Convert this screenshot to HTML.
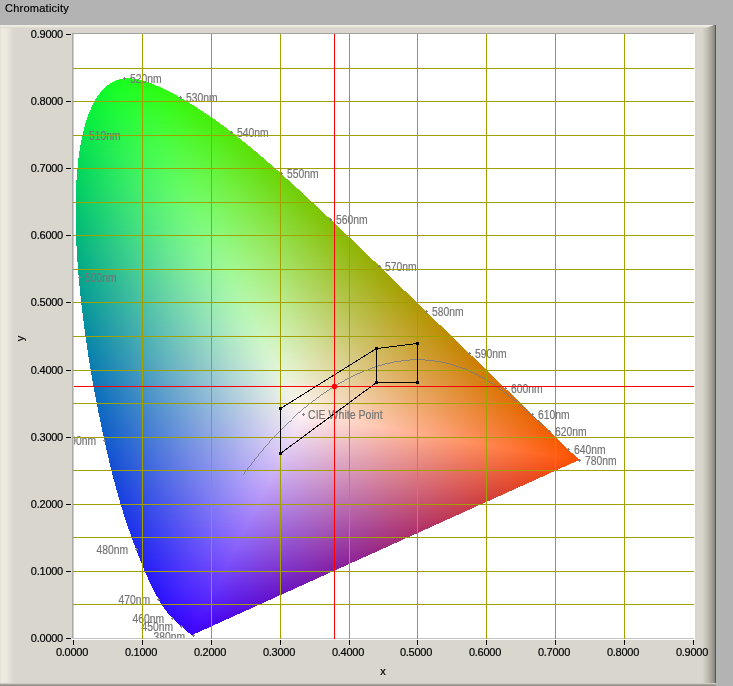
<!DOCTYPE html>
<html><head><meta charset="utf-8"><title>Chromaticity</title>
<style>
html,body{margin:0;padding:0}
body{width:733px;height:686px;background:#b3b3b3;position:relative;overflow:hidden;font-family:"Liberation Sans",sans-serif;font-size:11px;color:#000}
#title,.yl,.xl,#yy{will-change:transform}
#title,.yl,.xl,#yy{-webkit-text-stroke:.2px #000}
.lb{-webkit-text-stroke:.2px #757575}
#title{position:absolute;left:5.4px;top:2px;line-height:13px;letter-spacing:.25px;white-space:nowrap}
#panel{position:absolute;left:0;top:25px;width:716px;height:661px;background:#d9d6ce;overflow:hidden}
#pl{position:absolute;left:0;top:0;width:14px;height:661px;background:linear-gradient(90deg,#e2dfd5 0,#eeebe1 2px,#ece9df 6px,#d9d6ce 14px)}
#pt{position:absolute;left:0;top:0;width:714px;height:3px;clip-path:polygon(0 0,714px 0,706px 3px,0 3px);background:linear-gradient(180deg,#f1eee3 0,#ebe8dd 1.5px,#d9d6ce 3px)}
#pr{position:absolute;left:702px;top:0;width:14px;height:661px;background:linear-gradient(90deg,#d9d6ce 0,#c2bfb6 5px,#a29f97 10px,#8a877f 12.5px,#5e5c55 13px,#55534d 14px)}
#pb{position:absolute;left:0;top:658px;width:716px;height:3px;background:linear-gradient(180deg,#d2cfc7 0,#cbc8c0 1px,#a7a49c 1.5px,#8b8880 3px)}
#plot{position:absolute;left:72px;top:33px;width:623px;height:607px;background:#fff;overflow:hidden}
#bw{position:absolute;left:0;top:606px;width:623px;height:1px;background:#fff}
#bl{position:absolute;left:0;top:0;width:2px;height:606px;background:linear-gradient(90deg,#a9a9a9 1px,#cdcdcd 1px)}
#bt{position:absolute;left:0;top:0;width:622px;height:1px;background:#a2a2a2}
#bb{position:absolute;left:0;top:605px;width:622px;height:1px;background:#c2c2c6}
#fill{position:absolute;left:-72px;top:-33px;will-change:transform}
#fill i{position:absolute;height:1px;display:block}
.lb{position:absolute;color:#757575;font-size:12.5px;line-height:13px;white-space:nowrap;transform:scaleX(.827);transform-origin:0 0}
.lr{transform-origin:100% 0}
.mk{position:absolute;width:3px;height:3px}
.mk:before{content:"";position:absolute;left:1px;top:0;width:1px;height:3px;background:#808080}
.mk:after{content:"";position:absolute;left:0;top:1px;width:3px;height:1px;background:#808080}
.gv{position:absolute;top:1px;width:1px;height:605px;background:#a0a000}
.gh{position:absolute;left:1px;height:1px;width:621px;background:#a0a000}
.tk{position:absolute;background:#000}
.yl{position:absolute;width:60px;text-align:right;line-height:13px;letter-spacing:-.25px;white-space:nowrap}
.xl{position:absolute;width:60px;text-align:center;line-height:13px;letter-spacing:-.25px;white-space:nowrap}
.ov{position:absolute;left:0;top:0}
</style></head>
<body>
<div id="title">Chromaticity</div>
<div id="panel"><div id="pl"></div><div id="pr"></div><div id="pt"></div><div id="pb"></div></div>
<div id="plot">
<div id="fill"><i style="top:78px;left:124px;width:8px;background:linear-gradient(90deg,#1aff1c 0.5px,#1eff19 7.5px)"></i>
<i style="top:79px;left:119px;width:20px;background:linear-gradient(90deg,#17ff1f 0.5px,#21ff16 19.5px)"></i>
<i style="top:80px;left:116px;width:27px;background:linear-gradient(90deg,#16fe21 0.5px,#23fe15 26.5px)"></i>
<i style="top:81px;left:114px;width:32px;background:linear-gradient(90deg,#15fe22 0.5px,#1dff1e 13.5px,#25fe14 31.5px)"></i>
<i style="top:82px;left:112px;width:37px;background:linear-gradient(90deg,#14fd24 0.5px,#1eff1e 17.5px,#26fd13 36.5px)"></i>
<i style="top:83px;left:110px;width:42px;background:linear-gradient(90deg,#13fd25 0.5px,#20ff1e 21.5px,#28fd12 41.5px)"></i>
<i style="top:84px;left:109px;width:45px;background:linear-gradient(90deg,#13fc26 0.5px,#1eff20 18.5px,#29fc12 44.5px)"></i>
<i style="top:85px;left:107px;width:49px;background:linear-gradient(90deg,#11fc27 0.5px,#1fff21 21.5px,#2afc12 48.5px)"></i>
<i style="top:86px;left:106px;width:53px;background:linear-gradient(90deg,#11fb28 0.5px,#1fff22 21.5px,#28fe18 41.5px,#2bfb11 52.5px)"></i>
<i style="top:87px;left:105px;width:56px;background:linear-gradient(90deg,#11fb29 0.5px,#21ff22 25.5px,#2cfb10 55.5px)"></i>
<i style="top:88px;left:104px;width:59px;background:linear-gradient(90deg,#10fb2a 0.5px,#2f2 28.5px,#28fe1c 40.5px,#2dfb10 58.5px)"></i>
<i style="top:89px;left:103px;width:62px;background:linear-gradient(90deg,#10fa2b 0.5px,#21ff24 26.5px,#29fe1c 42.5px,#2efa10 61.5px)"></i>
<i style="top:90px;left:102px;width:65px;background:linear-gradient(90deg,#0ffa2c 0.5px,#23ff24 29.5px,#2bfd19 50.5px,#2ffa0f 64.5px)"></i>
<i style="top:91px;left:101px;width:68px;background:linear-gradient(90deg,#0ef92d 0.5px,#18fc2a 12.5px,#26ff22 35.5px,#2afe1d 46.5px,#30f90f 67.5px)"></i>
<i style="top:92px;left:100px;width:71px;background:linear-gradient(90deg,#0ef92d 0.5px,#1efe29 22.5px,#24fe25 33.5px,#2afe1f 44.5px,#31f90e 70.5px)"></i>
<i style="top:93px;left:100px;width:73px;background:linear-gradient(90deg,#0ef82e 0.5px,#1bfd2b 17.5px,#26fe25 35.5px,#2cfe1d 49.5px,#32f80e 72.5px)"></i>
<i style="top:94px;left:99px;width:76px;background:linear-gradient(90deg,#0ef82f 0.5px,#1ffe2a 24.5px,#27fe25 38.5px,#2cfe1e 50.5px,#33f80d 75.5px)"></i>
<i style="top:95px;left:98px;width:79px;background:linear-gradient(90deg,#0df730 0.5px,#1cfd2c 20.5px,#27fe26 37.5px,#2ffd1c 57.5px,#34f70d 78.5px)"></i>
<i style="top:96px;left:97px;width:81px;background:linear-gradient(90deg,#0cf731 0.5px,#1dfd2d 22.5px,#27fe28 37.5px,#2dfe20 52.5px,#35f70d 80.5px)"></i>
<i style="top:97px;left:97px;width:83px;background:linear-gradient(90deg,#0df731 0.5px,#1afb2f 17.5px,#28fe28 39.5px,#30fd1d 59.5px,#36f70d 82.5px)"></i>
<i style="top:98px;left:96px;width:86px;background:linear-gradient(90deg,#0cf632 0.5px,#1dfc2f 21.5px,#29fe28 42.5px,#31fd1e 60.5px,#37f60c 85.5px)"></i>
<i style="top:99px;left:95px;width:89px;background:linear-gradient(90deg,#0bf533 0.5px,#1cfc30 21.5px,#27fe2b 37.5px,#31fd1f 61.5px,#38f50c 88.5px)"></i>
<i style="top:100px;left:95px;width:90px;background:linear-gradient(90deg,#0cf534 0.5px,#21fd2f 27.5px,#2efe26 50.5px,#35fb19 71.5px,#38f50c 89.5px)"></i>
<i style="top:101px;left:94px;width:93px;background:linear-gradient(90deg,#0bf534 0.5px,#20fc30 26.5px,#2afe2b 43.5px,#34fc1e 66.5px,#39f50b 92.5px)"></i>
<i style="top:102px;left:94px;width:95px;background:linear-gradient(90deg,#0bf435 0.5px,#1efc31 24.5px,#2bfe2c 43.5px,#33fd21 63.5px,#3af40b 94.5px)"></i>
<i style="top:103px;left:93px;width:97px;background:linear-gradient(90deg,#0af436 0.5px,#21fc32 28.5px,#2dfe2b 47.5px,#31fe26 58.5px,#37fb1b 74.5px,#3bf40b 96.5px)"></i>
<i style="top:104px;left:93px;width:99px;background:linear-gradient(90deg,#0bf336 0.5px,#20fc33 27.5px,#2dfe2c 48.5px,#36fc1f 70.5px,#3cf30a 98.5px)"></i>
<i style="top:105px;left:92px;width:102px;background:linear-gradient(90deg,#0af337 0.5px,#22fc33 29.5px,#2ffe2c 51.5px,#37fc20 71.5px,#3df30a 101.5px)"></i>
<i style="top:106px;left:92px;width:103px;background:linear-gradient(90deg,#0af238 0.5px,#1bf936 20.5px,#2afe30 41.5px,#35fd26 64.5px,#3bf817 85.5px,#3df20a 102.5px)"></i>
<i style="top:107px;left:91px;width:106px;background:linear-gradient(90deg,#09f238 0.5px,#1efa36 24.5px,#2efe2f 49.5px,#38fc22 72.5px,#3ef209 105.5px)"></i>
<i style="top:108px;left:91px;width:107px;background:linear-gradient(90deg,#0af239 0.5px,#1efa37 24.5px,#30fe2f 51.5px,#3bfa1d 81.5px,#3ff20a 106.5px)"></i>
<i style="top:109px;left:91px;width:109px;background:linear-gradient(90deg,#0af13a 0.5px,#24fc36 32.5px,#31fe2f 53.5px,#3afb20 78.5px,#40f109 108.5px)"></i>
<i style="top:110px;left:90px;width:111px;background:linear-gradient(90deg,#09f13a 0.5px,#27fc36 36.5px,#32fe2f 56.5px,#3bfb22 78.5px,#41f109 110.5px)"></i>
<i style="top:111px;left:90px;width:113px;background:linear-gradient(90deg,#09f03b 0.5px,#1ff939 26.5px,#2ffe33 48.5px,#3bfb24 76.5px,#41f009 112.5px)"></i>
<i style="top:112px;left:89px;width:115px;background:linear-gradient(90deg,#08f03c 0.5px,#20fa39 28.5px,#30fd33 50.5px,#38fd2b 68.5px,#3cfb22 81.5px,#42f009 114.5px)"></i>
<i style="top:113px;left:89px;width:117px;background:linear-gradient(90deg,#09ef3c 0.5px,#22fa3a 29.5px,#33fe32 56.5px,#3cfb26 77.5px,#3ff81b 92.5px,#43ef08 116.5px)"></i>
<i style="top:114px;left:88px;width:119px;background:linear-gradient(90deg,#08ef3d 0.5px,#23fa3a 31.5px,#35fe32 59.5px,#3efa22 86.5px,#44ef08 118.5px)"></i>
<i style="top:115px;left:88px;width:121px;background:linear-gradient(90deg,#08ee3e 0.5px,#24fa3b 33.5px,#33fe34 55.5px,#39fd2f 67.5px,#3ffa23 85.5px,#44ee08 120.5px)"></i>
<i style="top:116px;left:88px;width:122px;background:linear-gradient(90deg,#08ee3e 0.5px,#27fb3b 36.5px,#32fd36 52.5px,#38fd31 65.5px,#41f920 91.5px,#45ee08 121.5px)"></i>
<i style="top:117px;left:87px;width:125px;background:linear-gradient(90deg,#07ed3f 0.5px,#23f93c 31.5px,#2afb3b 41.5px,#35fe35 58.5px,#40fa25 87.5px,#46ed07 124.5px)"></i>
<i style="top:118px;left:87px;width:126px;background:linear-gradient(90deg,#07ed3f 0.5px,#24f93d 32.5px,#36fe35 60.5px,#40fb28 84.5px,#47ed08 125.5px)"></i>
<i style="top:119px;left:87px;width:128px;background:linear-gradient(90deg,#08ed40 0.5px,#25f93e 33.5px,#38fe35 63.5px,#3ffb2b 81.5px,#43f821 94.5px,#47ec07 127.5px)"></i>
<i style="top:120px;left:86px;width:130px;background:linear-gradient(90deg,#07ec41 0.5px,#27fa3e 37.5px,#39fd36 64.5px,#3efd2f 76.5px,#43f923 94.5px,#48ec07 129.5px)"></i>
<i style="top:121px;left:86px;width:131px;background:linear-gradient(90deg,#07ec41 0.5px,#28f93f 37.5px,#32fd3b 52.5px,#3afd36 66.5px,#43fa26 91.5px,#45f61e 103.5px,#49ec07 130.5px)"></i>
<i style="top:122px;left:86px;width:133px;background:linear-gradient(90deg,#07eb42 0.5px,#29fa3f 38.5px,#31fc3d 49.5px,#3bfd36 66.5px,#44f925 95.5px,#49eb06 132.5px)"></i>
<i style="top:123px;left:85px;width:135px;background:linear-gradient(90deg,#06ea42 0.5px,#24f841 33.5px,#32fc3d 51.5px,#39fd39 64.5px,#3ffd32 77.5px,#45f926 95.5px,#4aeb07 134.5px)"></i>
<i style="top:124px;left:85px;width:136px;background:linear-gradient(90deg,#06ea43 0.5px,#15f143 15.5px,#27f941 37.5px,#38fd3b 60.5px,#3ffd34 76.5px,#45fa29 93.5px,#4bea07 135.5px)"></i>
<i style="top:125px;left:85px;width:138px;background:linear-gradient(90deg,#07ea44 0.5px,#29f941 38.5px,#35fc3e 55.5px,#3cfd39 68.5px,#41fd33 78.5px,#47f825 99.5px,#4bea06 137.5px)"></i>
<i style="top:126px;left:85px;width:139px;background:linear-gradient(90deg,#07ea44 0.5px,#1ff444 26.5px,#2cfa41 42.5px,#3efd39 70.5px,#48f723 104.5px,#4ce906 138.5px)"></i>
<i style="top:127px;left:84px;width:142px;background:linear-gradient(90deg,#06e945 0.5px,#2af943 40.5px,#3cfd3c 66.5px,#47fa2b 95.5px,#4de906 141.5px)"></i>
<i style="top:128px;left:84px;width:143px;background:linear-gradient(90deg,#06e845 0.5px,#23f545 31.5px,#2bf943 41.5px,#3dfd3c 68.5px,#44fc34 83.5px,#48f929 99.5px,#4ee806 142.5px)"></i>
<i style="top:129px;left:84px;width:144px;background:linear-gradient(90deg,#06e846 0.5px,#1ef346 26.5px,#2ef943 44.5px,#3efd3c 70.5px,#43fd37 79.5px,#49f92a 99.5px,#4cf21c 118.5px,#4ee806 143.5px)"></i>
<i style="top:130px;left:84px;width:145px;background:linear-gradient(90deg,#06e847 0.5px,#2bf845 40.5px,#3ffd3d 70.5px,#46fc34 86.5px,#4af828 103.5px,#4fe806 144.5px)"></i>
<i style="top:131px;left:83px;width:148px;background:linear-gradient(90deg,#05e747 0.5px,#28f646 37.5px,#37fc42 57.5px,#40fd3d 73.5px,#4bf829 104.5px,#4fee14 131.5px,#4fe705 147.5px)"></i>
<i style="top:132px;left:83px;width:149px;background:linear-gradient(90deg,#05e748 0.5px,#29f747 38.5px,#3ffd3f 69.5px,#47fc35 88.5px,#4bf72a 105.5px,#4ff11a 125.5px,#50e705 148.5px)"></i>
<i style="top:133px;left:83px;width:150px;background:linear-gradient(90deg,#06e648 0.5px,#2cf847 42.5px,#40fd40 70.5px,#45fd3a 81.5px,#4cf82b 105.5px,#51e606 149.5px)"></i>
<i style="top:134px;left:83px;width:152px;background:linear-gradient(90deg,#06e649 0.5px,#23f449 31.5px,#31f947 48.5px,#43fd3e 75.5px,#4afb33 94.5px,#4df629 109.5px,#51ee15 133.5px,#51e605 151.5px)"></i>
<i style="top:135px;left:82px;width:154px;background:linear-gradient(90deg,#05e549 0.5px,#1ef14a 26.5px,#2df748 43.5px,#3afc45 61.5px,#42fd40 75.5px,#49fc38 90.5px,#4df82e 104.5px,#50f320 122.5px,#52e505 153.5px)"></i>
<i style="top:136px;left:82px;width:155px;background:linear-gradient(90deg,#05e54a 0.5px,#2ff849 45.5px,#44fd40 77.5px,#4bfb35 95.5px,#4ff62a 111.5px,#51f21f 125.5px,#53e505 154.5px)"></i>
<i style="top:137px;left:82px;width:156px;background:linear-gradient(90deg,#05e44a 0.5px,#25f44a 34.5px,#34f948 51.5px,#42fd43 72.5px,#4ef930 104.5px,#52f01c 130.5px,#53e505 155.5px)"></i>
<i style="top:138px;left:82px;width:158px;background:linear-gradient(90deg,#05e44b 0.5px,#1cef4c 23.5px,#2cf64a 41.5px,#36fa49 54.5px,#43fd43 74.5px,#4bfc3a 91.5px,#4ff830 106.5px,#53ed18 136.5px,#54e404 157.5px)"></i>
<i style="top:139px;left:82px;width:159px;background:linear-gradient(90deg,#05e44c 0.5px,#1eef4c 25.5px,#30f74b 46.5px,#44fd43 74.5px,#4afc3d 88.5px,#4ff831 106.5px,#54ee19 136.5px,#55e305 158.5px)"></i>
<i style="top:140px;left:81px;width:161px;background:linear-gradient(90deg,#04e34c 0.5px,#2ef64c 44.5px,#3afb49 60.5px,#46fd43 78.5px,#4dfb39 97.5px,#52f62b 116.5px,#55e305 160.5px)"></i>
<i style="top:141px;left:81px;width:162px;background:linear-gradient(90deg,#04e24d 0.5px,#19ed4d 21.5px,#2bf44d 40.5px,#3bfa4a 60.5px,#44fd45 75.5px,#4afc40 87.5px,#51f832 108.5px,#55ee1c 136.5px,#56e305 161.5px)"></i>
<i style="top:142px;left:81px;width:164px;background:linear-gradient(90deg,#05e24d 0.5px,#28f34e 37.5px,#33f84c 50.5px,#40fc49 67.5px,#4afc42 85.5px,#52f72f 113.5px,#55ee1d 136.5px,#57e204 163.5px)"></i>
<i style="top:143px;left:81px;width:165px;background:linear-gradient(90deg,#05e24e 0.5px,#2ef54e 43.5px,#3afa4c 58.5px,#47fd46 78.5px,#4dfc3f 92.5px,#54f52c 118.5px,#56ef1f 135.5px,#57e204 164.5px)"></i>
<i style="top:144px;left:81px;width:166px;background:linear-gradient(90deg,#05e14e 0.5px,#1bed4f 23.5px,#2ff54e 44.5px,#3dfa4c 62.5px,#48fd46 80.5px,#50fb3c 98.5px,#55f52c 120.5px,#57ec1a 142.5px,#58e104 165.5px)"></i>
<i style="top:145px;left:80px;width:168px;background:linear-gradient(90deg,#04e04f 0.5px,#31f64f 47.5px,#42fc4a 70.5px,#49fc47 81.5px,#4efc40 94.5px,#53f834 112.5px,#58ed1c 141.5px,#58e104 167.5px)"></i>
<i style="top:146px;left:80px;width:170px;background:linear-gradient(90deg,#04e04f 0.5px,#2ff550 45.5px,#43fc4b 71.5px,#4afc47 83.5px,#51fb3e 99.5px,#55f62f 119.5px,#58ed1d 142.5px,#59e004 169.5px)"></i>
<i style="top:147px;left:80px;width:171px;background:linear-gradient(90deg,#04e050 0.5px,#34f650 50.5px,#40fb4d 66.5px,#4bfc47 85.5px,#52fb3d 101.5px,#57f42d 123.5px,#59ed1e 142.5px,#5ae004 170.5px)"></i>
<i style="top:148px;left:80px;width:172px;background:linear-gradient(90deg,#04df50 0.5px,#18e952 20.5px,#33f651 49.5px,#40fa4e 65.5px,#49fc4a 80.5px,#52fb3e 101.5px,#57f531 120.5px,#5aeb19 148.5px,#5adf04 171.5px)"></i>
<i style="top:149px;left:80px;width:173px;background:linear-gradient(90deg,#04df51 0.5px,#28f052 36.5px,#31f551 47.5px,#41fa4f 66.5px,#4bfc4a 82.5px,#51fc43 95.5px,#57f734 117.5px,#5aee21 141.5px,#5bdf04 172.5px)"></i>
<i style="top:150px;left:80px;width:174px;background:linear-gradient(90deg,#04df52 0.5px,#30f452 45.5px,#3cf951 60.5px,#4bfc4b 81.5px,#53fb42 99.5px,#57f837 114.5px,#5aee23 140.5px,#5bdf04 173.5px)"></i>
<i style="top:151px;left:79px;width:177px;background:linear-gradient(90deg,#03de52 0.5px,#34f553 50.5px,#47fc4e 76.5px,#4efc4a 87.5px,#54fb41 103.5px,#59f532 124.5px,#5cec1e 147.5px,#5cde03 176.5px)"></i>
<i style="top:152px;left:79px;width:178px;background:linear-gradient(90deg,#03dd53 0.5px,#20eb54 28.5px,#34f553 50.5px,#42fa51 68.5px,#4dfc4c 84.5px,#54fb44 100.5px,#58f736 119.5px,#5cec1f 148.5px,#5ddd03 177.5px)"></i>
<i style="top:153px;left:79px;width:179px;background:linear-gradient(90deg,#03dd53 0.5px,#23ec55 31.5px,#37f654 54.5px,#47fb50 75.5px,#50fc4a 89.5px,#55fb43 103.5px,#5af534 124.5px,#5dea1b 153.5px,#5ddd03 178.5px)"></i>
<i style="top:154px;left:79px;width:180px;background:linear-gradient(90deg,#04dd54 0.5px,#32f355 47.5px,#44fa52 69.5px,#4efc4d 86.5px,#56fb43 104.5px,#5bf535 124.5px,#5eeb1e 151.5px,#5edd04 179.5px)"></i>
<i style="top:155px;left:79px;width:181px;background:linear-gradient(90deg,#04dc54 0.5px,#17e656 19.5px,#36f555 52.5px,#45fa52 70.5px,#50fc4d 88.5px,#58fa41 108.5px,#5cf432 129.5px,#5fe718 159.5px,#5edc04 180.5px)"></i>
<i style="top:156px;left:79px;width:182px;background:linear-gradient(90deg,#04dc55 0.5px,#23ec56 31.5px,#3bf655 57.5px,#48fb52 74.5px,#51fc4d 90.5px,#58fa44 106.5px,#5df433 129.5px,#5fea1d 154.5px,#5fdc04 181.5px)"></i>
<i style="top:157px;left:79px;width:184px;background:linear-gradient(90deg,#04db55 0.5px,#36f457 51.5px,#49fb53 75.5px,#53fc4d 92.5px,#5af941 112.5px,#5ef12c 138.5px,#60db03 183.5px)"></i>
<i style="top:158px;left:78px;width:186px;background:linear-gradient(90deg,#03db56 0.5px,#34f357 50.5px,#42f856 66.5px,#51fc50 88.5px,#58fb46 106.5px,#5ef436 129.5px,#60ed25 149.5px,#60db03 185.5px)"></i>
<i style="top:159px;left:78px;width:187px;background:linear-gradient(90deg,#03da56 0.5px,#32f258 48.5px,#43f856 67.5px,#52fc50 90.5px,#57fc4b 100.5px,#5cf840 116.5px,#5ff230 137.5px,#61ea22 154.5px,#61da03 186.5px)"></i>
<i style="top:160px;left:78px;width:188px;background:linear-gradient(90deg,#03da57 0.5px,#34f259 49.5px,#4afa55 76.5px,#52fc51 90.5px,#5afa48 107.5px,#60f233 135.5px,#61ec24 152.5px,#61da03 187.5px)"></i>
<i style="top:161px;left:78px;width:189px;background:linear-gradient(90deg,#03d957 0.5px,#28ec5a 36.5px,#36f359 52.5px,#42f758 65.5px,#54fc51 92.5px,#5cfa45 112.5px,#60f437 131.5px,#62eb25 153.5px,#62da03 188.5px)"></i>
<i style="top:162px;left:78px;width:190px;background:linear-gradient(90deg,#03d958 0.5px,#26eb5a 34.5px,#3ef559 60.5px,#4afa57 75.5px,#55fc51 94.5px,#5cfa48 110.5px,#61f233 138.5px,#63d903 189.5px)"></i>
<i style="top:163px;left:78px;width:192px;background:linear-gradient(90deg,#03d958 0.5px,#22e85b 30.5px,#39f35a 54.5px,#46f859 70.5px,#54fc53 91.5px,#5cfa49 110.5px,#61f53a 130.5px,#64e71e 163.5px,#63d802 191.5px)"></i>
<i style="top:164px;left:78px;width:193px;background:linear-gradient(90deg,#03d859 0.5px,#39f35b 54.5px,#49f959 74.5px,#55fc54 91.5px,#5dfa49 110.5px,#62f336 136.5px,#64e820 162.5px,#64d803 192.5px)"></i>
<i style="top:165px;left:78px;width:194px;background:linear-gradient(90deg,#03d859 0.5px,#26ea5c 34.5px,#3bf35c 56.5px,#4cfa59 77.5px,#57fc53 94.5px,#5efa48 113.5px,#64f032 143.5px,#64d803 193.5px)"></i>
<i style="top:166px;left:78px;width:195px;background:linear-gradient(90deg,#03d75a 0.5px,#35f05c 49.5px,#48f85b 71.5px,#55fc55 91.5px,#5efa4b 110.5px,#64f237 138.5px,#65ec29 154.5px,#65d703 194.5px)"></i>
<i style="top:167px;left:78px;width:196px;background:linear-gradient(90deg,#03d75a 0.5px,#1de45d 25.5px,#40f45c 61.5px,#4af95b 74.5px,#59fc54 97.5px,#61f846 120.5px,#65f134 142.5px,#66e926 159.5px,#65d703 195.5px)"></i>
<i style="top:168px;left:77px;width:198px;background:linear-gradient(90deg,#02d65b 0.5px,#39f15e 54.5px,#4af85c 74.5px,#57fc56 94.5px,#60fa4b 114.5px,#65f33a 138.5px,#66ea27 160.5px,#66d603 197.5px)"></i>
<i style="top:169px;left:77px;width:199px;background:linear-gradient(90deg,#02d65b 0.5px,#1ce35e 24.5px,#3bf25e 56.5px,#49f85d 73.5px,#58fc57 95.5px,#61f94b 116.5px,#66f238 141.5px,#67e41d 172.5px,#67d603 198.5px)"></i>
<i style="top:170px;left:77px;width:201px;background:linear-gradient(90deg,#02d55c 0.5px,#27e85f 35.5px,#3df35f 59.5px,#50fa5c 82.5px,#59fb57 95.5px,#60fa4f 112.5px,#66f33b 139.5px,#68e51f 171.5px,#67d502 200.5px)"></i>
<i style="top:171px;left:77px;width:202px;background:linear-gradient(90deg,#02d55c 0.5px,#2dea60 41.5px,#3ff35f 60.5px,#51fa5c 82.5px,#5bfb57 99.5px,#62fa4d 116.5px,#67f239 142.5px,#69e622 169.5px,#68d502 201.5px)"></i>
<i style="top:172px;left:77px;width:203px;background:linear-gradient(90deg,#03d45d 0.5px,#1ae15f 22.5px,#41f460 63.5px,#52fa5d 83.5px,#5cfb57 101.5px,#62fa4e 116.5px,#68f13a 143.5px,#69ec2e 157.5px,#68d402 202.5px)"></i>
<i style="top:173px;left:77px;width:204px;background:linear-gradient(90deg,#03d45d 0.5px,#28e761 36.5px,#40f360 61.5px,#52f95e 83.5px,#5efb57 103.5px,#64f94c 121.5px,#69f037 148.5px,#69d402 203.5px)"></i>
<i style="top:174px;left:77px;width:205px;background:linear-gradient(90deg,#03d45e 0.5px,#1fe261 27.5px,#3bf061 55.5px,#45f561 67.5px,#54fa5e 85.5px,#5cfb5a 98.5px,#64fa4f 117.5px,#69f23d 142.5px,#6ae828 166.5px,#69d402 204.5px)"></i>
<i style="top:175px;left:77px;width:206px;background:linear-gradient(90deg,#03d35e 0.5px,#26e662 34.5px,#3ff262 60.5px,#4ff860 78.5px,#5cfb5b 98.5px,#64fa50 117.5px,#69f441 138.5px,#6be82a 165.5px,#6ad302 205.5px)"></i>
<i style="top:176px;left:77px;width:207px;background:linear-gradient(90deg,#03d35f 0.5px,#2fea63 43.5px,#45f462 66.5px,#53f960 84.5px,#61fb58 106.5px,#66f94e 122.5px,#6af23d 144.5px,#6ce92c 163.5px,#6ad303 206.5px)"></i>
<i style="top:177px;left:77px;width:208px;background:linear-gradient(90deg,#03d25f 0.5px,#24e463 32.5px,#3ff163 59.5px,#52f961 82.5px,#5ffb5b 102.5px,#66f94f 122.5px,#6bf23e 144.5px,#6cdf19 185.5px,#6bd203 207.5px)"></i>
<i style="top:178px;left:77px;width:209px;background:linear-gradient(90deg,#03d260 0.5px,#23e363 30.5px,#43f264 63.5px,#56fa60 87.5px,#60fb5b 104.5px,#68f84f 124.5px,#6cf13d 147.5px,#6cd203 208.5px)"></i>
<i style="top:179px;left:77px;width:211px;background:linear-gradient(90deg,#03d160 0.5px,#23e264 30.5px,#3ef064 58.5px,#54f862 83.5px,#5efb5e 99.5px,#66fa54 118.5px,#6cf241 143.5px,#6de92d 166.5px,#6cd102 210.5px)"></i>
<i style="top:180px;left:76px;width:213px;background:linear-gradient(90deg,#02d061 0.5px,#1cdf64 25.5px,#41f165 62.5px,#55f863 85.5px,#60fb5e 102.5px,#68f953 121.5px,#6df13e 149.5px,#6ee527 175.5px,#6dd102 212.5px)"></i>
<i style="top:181px;left:76px;width:214px;background:linear-gradient(90deg,#02d061 0.5px,#22e165 30.5px,#44f265 65.5px,#59f962 90.5px,#61fb5e 104.5px,#68fa55 120.5px,#6ef03e 150.5px,#6fe62a 173.5px,#6dd002 213.5px)"></i>
<i style="top:182px;left:76px;width:215px;background:linear-gradient(90deg,#02d062 0.5px,#28e466 36.5px,#40f066 61.5px,#54f864 83.5px,#63fb5e 106.5px,#68fa56 120.5px,#6ef242 147.5px,#6fe72c 172.5px,#6ed002 214.5px)"></i>
<i style="top:183px;left:76px;width:216px;background:linear-gradient(90deg,#02cf62 0.5px,#1adc65 22.5px,#43f167 64.5px,#55f865 84.5px,#63fb5f 105.5px,#69f956 122.5px,#6ff140 150.5px,#70e72e 171.5px,#6ecf02 215.5px)"></i>
<i style="top:184px;left:76px;width:217px;background:linear-gradient(90deg,#02cf63 0.5px,#31e867 45.5px,#4ff567 77.5px,#5cfa64 94.5px,#65fb5e 108.5px,#6cf852 129.5px,#70f040 152.5px,#70dd1a 192.5px,#6fcf02 216.5px)"></i>
<i style="top:185px;left:76px;width:218px;background:linear-gradient(90deg,#02ce63 0.5px,#28e367 36.5px,#47f168 67.5px,#56f866 85.5px,#63fb61 105.5px,#6cf855 126.5px,#71ee3d 156.5px,#71e224 183.5px,#6fcf02 217.5px)"></i>
<i style="top:186px;left:76px;width:219px;background:linear-gradient(90deg,#02ce64 0.5px,#33e768 46.5px,#46f169 66.5px,#59f866 88.5px,#65fb61 107.5px,#6ef752 132.5px,#71ef3e 156.5px,#72de1f 190.5px,#70ce02 218.5px)"></i>
<i style="top:187px;left:76px;width:220px;background:linear-gradient(90deg,#02ce64 0.5px,#2ce369 39.5px,#4bf269 71.5px,#55f768 83.5px,#65fb62 107.5px,#69fb5e 114.5px,#6ef751 134.5px,#72ef41 154.5px,#72e024 186.5px,#71ce02 219.5px)"></i>
<i style="top:188px;left:76px;width:221px;background:linear-gradient(90deg,#02cd65 0.5px,#2ae269 37.5px,#45f06a 65.5px,#5bf867 90.5px,#67fb62 109.5px,#6ff754 132.5px,#73ee3e 159.5px,#73e228 183.5px,#71cd02 220.5px)"></i>
<i style="top:189px;left:76px;width:223px;background:linear-gradient(90deg,#02cd65 0.5px,#43ee6b 62.5px,#59f769 87.5px,#65fb64 106.5px,#6ef959 126.5px,#73f145 152.5px,#74e42c 180.5px,#72cc01 222.5px)"></i>
<i style="top:190px;left:76px;width:224px;background:linear-gradient(90deg,#02cc66 0.5px,#43ee6b 62.5px,#5df869 92.5px,#68fb63 109.5px,#70f756 132.5px,#74ef43 156.5px,#74de21 192.5px,#72cc01 223.5px)"></i>
<i style="top:191px;left:76px;width:225px;background:linear-gradient(90deg,#02cc66 0.5px,#2ae16b 37.5px,#48f06c 67.5px,#5bf76a 89.5px,#67fb65 108.5px,#70f859 129.5px,#74f148 151.5px,#75e631 177.5px,#73cc01 224.5px)"></i>
<i style="top:192px;left:76px;width:226px;background:linear-gradient(90deg,#02cb67 0.5px,#2ce26b 39.5px,#4af06c 69.5px,#5bf76b 89.5px,#67fb66 107.5px,#71f858 132.5px,#75f046 154.5px,#76e026 189.5px,#73cb02 225.5px)"></i>
<i style="top:193px;left:76px;width:227px;background:linear-gradient(90deg,#02cb67 0.5px,#29e06c 36.5px,#4cf16d 71.5px,#63f969 99.5px,#6afb65 112.5px,#71f85b 129.5px,#76ee43 159.5px,#76de23 193.5px,#74cb02 226.5px)"></i>
<i style="top:194px;left:76px;width:228px;background:linear-gradient(90deg,#02cb67 0.5px,#21db6b 28.5px,#41eb6e 60.5px,#5bf76c 88.5px,#69fa67 108.5px,#6cfb64 115.5px,#72f85a 132.5px,#76ee42 161.5px,#7d2 195.5px,#74ca02 227.5px)"></i>
<i style="top:195px;left:76px;width:229px;background:linear-gradient(90deg,#02ca68 0.5px,#29df6d 36.5px,#4bf06e 70.5px,#5cf76d 90.5px,#6bfb67 111.5px,#72f85b 132.5px,#77f048 156.5px,#77e028 190.5px,#75ca02 228.5px)"></i>
<i style="top:196px;left:76px;width:230px;background:linear-gradient(90deg,#02ca68 0.5px,#2ee16e 41.5px,#52f26f 77.5px,#63f96c 99.5px,#6cfb67 112.5px,#73f85c 132.5px,#78ee45 161.5px,#78da1e 201.5px,#75ca02 229.5px)"></i>
<i style="top:197px;left:76px;width:231px;background:linear-gradient(90deg,#02c969 0.5px,#28dd6e 35.5px,#47ed6f 65.5px,#5ff76e 92.5px,#6dfb67 114.5px,#74f85d 132.5px,#78ee46 161.5px,#79de28 193.5px,#76c902 230.5px)"></i>
<i style="top:198px;left:76px;width:232px;background:linear-gradient(90deg,#02c969 0.5px,#30e16f 42.5px,#4df070 72.5px,#60f76e 93.5px,#6efa68 115.5px,#73f95f 130.5px,#79ef48 160.5px,#79e22f 187.5px,#77c902 231.5px)"></i>
<i style="top:199px;left:76px;width:233px;background:linear-gradient(90deg,#02c86a 0.5px,#2edf6f 40.5px,#48ed71 66.5px,#61f86f 95.5px,#6cfa6b 110.5px,#74f960 130.5px,#79f04a 158.5px,#7ae333 184.5px,#77c802 232.5px)"></i>
<i style="top:200px;left:76px;width:234px;background:linear-gradient(90deg,#02c86a 0.5px,#2ddf70 39.5px,#50f071 74.5px,#5ff770 92.5px,#6dfa6b 112.5px,#75f961 130.5px,#7aee47 163.5px,#7be02e 190.5px,#78c802 233.5px)"></i>
<i style="top:201px;left:76px;width:235px;background:linear-gradient(90deg,#02c76b 0.5px,#2cde70 38.5px,#45eb72 63.5px,#60f671 92.5px,#6efa6b 112.5px,#75f961 131.5px,#7aef4c 159.5px,#7bd922 203.5px,#78c802 234.5px)"></i>
<i style="top:202px;left:76px;width:237px;background:linear-gradient(90deg,#02c76b 0.5px,#2dde71 39.5px,#4aed72 68.5px,#61f671 93.5px,#6ffa6c 114.5px,#76f962 131.5px,#7bf04d 159.5px,#7cdd2a 196.5px,#79c701 236.5px)"></i>
<i style="top:203px;left:76px;width:238px;background:linear-gradient(90deg,#02c76c 0.5px,#31e072 43.5px,#56f173 80.5px,#65f871 98.5px,#70fa6c 116.5px,#77f863 132.5px,#7cf04e 159.5px,#7de436 185.5px,#79c601 237.5px)"></i>
<i style="top:204px;left:76px;width:239px;background:linear-gradient(90deg,#02c66c 0.5px,#29db71 35.5px,#52f074 76.5px,#67f871 100.5px,#72fa6c 118.5px,#78f861 136.5px,#7dec46 169.5px,#7ac601 238.5px)"></i>
<i style="top:205px;left:76px;width:240px;background:linear-gradient(90deg,#02c66d 0.5px,#31df73 43.5px,#4cec74 69.5px,#64f773 97.5px,#70fa6e 113.5px,#76f968 127.5px,#7df152 157.5px,#7ddf2e 195.5px,#7ac501 239.5px)"></i>
<i style="top:206px;left:76px;width:241px;background:linear-gradient(90deg,#02c56d 0.5px,#2cdc73 38.5px,#4fed75 72.5px,#62f674 93.5px,#71fa6f 115.5px,#78f965 132.5px,#7eef4f 161.5px,#7ee438 186.5px,#7bc501 240.5px)"></i>
<i style="top:207px;left:76px;width:242px;background:linear-gradient(90deg,#02c56e 0.5px,#38e174 49.5px,#54f075 78.5px,#67f774 100.5px,#72fa6f 115.5px,#77fa6a 127.5px,#7af863 137.5px,#7eee4e 164.5px,#7fdc2b 200.5px,#7bc401 241.5px)"></i>
<i style="top:208px;left:76px;width:243px;background:linear-gradient(90deg,#02c46e 0.5px,#26d773 32.5px,#4fed76 72.5px,#68f874 101.5px,#74fa6f 119.5px,#7cf761 141.5px,#7fed4b 168.5px,#7fdf32 195.5px,#7cc401 242.5px)"></i>
<i style="top:209px;left:76px;width:244px;background:linear-gradient(90deg,#02c46f 0.5px,#35df75 46.5px,#57f077 80.5px,#6cf874 105.5px,#75fa6f 121.5px,#7bf866 135.5px,#80ef51 163.5px,#80e136 192.5px,#7dc401 243.5px)"></i>
<i style="top:210px;left:76px;width:245px;background:linear-gradient(90deg,#02c36f 0.5px,#36df76 47.5px,#55ef77 78.5px,#62f577 93.5px,#73fa72 115.5px,#7df764 140.5px,#80ef51 164.5px,#81de31 198.5px,#7dc302 244.5px)"></i>
<i style="top:211px;left:76px;width:246px;background:linear-gradient(90deg,#02c36f 0.5px,#33dd76 44.5px,#4fec78 72.5px,#68f677 99.5px,#75fa72 118.5px,#7ef764 142.5px,#81ee4f 167.5px,#82e540 184.5px,#7ec302 245.5px)"></i>
<i style="top:212px;left:76px;width:247px;background:linear-gradient(90deg,#02c270 0.5px,#35de77 46.5px,#54ee78 77.5px,#65f578 96.5px,#75fa73 117.5px,#7ef765 142.5px,#82ef52 165.5px,#82de32 199.5px,#7ec202 246.5px)"></i>
<i style="top:213px;left:76px;width:248px;background:linear-gradient(90deg,#02c270 0.5px,#2fda77 41.5px,#57ef79 80.5px,#6ef877 106.5px,#78fa72 122.5px,#7ff766 142.5px,#83ec4d 172.5px,#7fc202 247.5px)"></i>
<i style="top:214px;left:76px;width:249px;background:linear-gradient(90deg,#02c271 0.5px,#38df78 49.5px,#54ec7a 76.5px,#6bf778 102.5px,#78fa73 121.5px,#7ff767 142.5px,#83ee52 168.5px,#83d92c 207.5px,#7fc202 248.5px)"></i>
<i style="top:215px;left:76px;width:250px;background:linear-gradient(90deg,#02c171 0.5px,#30da78 41.5px,#55ed7a 77.5px,#6df779 104.5px,#7afa72 124.5px,#80f768 142.5px,#83ee54 167.5px,#84dd33 201.5px,#80c102 249.5px)"></i>
<i style="top:216px;left:76px;width:251px;background:linear-gradient(90deg,#02c172 0.5px,#4ce87b 68.5px,#65f37a 94.5px,#77fa76 118.5px,#80f769 142.5px,#85eb4d 175.5px,#80c102 250.5px)"></i>
<i style="top:217px;left:76px;width:253px;background:linear-gradient(90deg,#02c072 0.5px,#33db79 44.5px,#56ec7c 78.5px,#6df77a 104.5px,#7afa75 123.5px,#81f76a 142.5px,#85ef57 165.5px,#85e039 197.5px,#81c001 252.5px)"></i>
<i style="top:218px;left:76px;width:254px;background:linear-gradient(90deg,#02c073 0.5px,#2ed779 39.5px,#57ed7c 79.5px,#68f47c 97.5px,#79fa77 120.5px,#81f76b 142.5px,#86ed53 171.5px,#85de36 201.5px,#81bf01 253.5px)"></i>
<i style="top:219px;left:76px;width:255px;background:linear-gradient(90deg,#02bf73 0.5px,#2ed779 39.5px,#5cef7d 84.5px,#6ef67b 104.5px,#7cfa76 125.5px,#83f669 145.5px,#86ed53 172.5px,#86e23f 194.5px,#82bf01 254.5px)"></i>
<i style="top:220px;left:76px;width:256px;background:linear-gradient(90deg,#02bf74 0.5px,#2dd67a 38.5px,#52ea7d 74.5px,#6bf57d 101.5px,#7cfa77 124.5px,#82f76d 142.5px,#87ee56 170.5px,#87de3a 200.5px,#82be01 255.5px)"></i>
<i style="top:221px;left:76px;width:257px;background:linear-gradient(90deg,#02be74 0.5px,#2dd57a 38.5px,#4fe87e 71.5px,#70f67d 106.5px,#7dfa77 125.5px,#83f76e 142.5px,#86f361 158.5px,#87ec55 173.5px,#88e13f 196.5px,#83be01 256.5px)"></i>
<i style="top:222px;left:76px;width:258px;background:linear-gradient(90deg,#02be74 0.5px,#34d97c 45.5px,#55ea7e 76.5px,#6ef67e 104.5px,#7cf979 124.5px,#83f86f 142.5px,#88f05d 165.5px,#88da34 208.5px,#83be01 257.5px)"></i>
<i style="top:223px;left:76px;width:259px;background:linear-gradient(90deg,#02bd75 0.5px,#32d87c 43.5px,#5ced7f 83.5px,#73f77e 109.5px,#7efa78 127.5px,#86f66b 149.5px,#89ee59 170.5px,#88db35 208.5px,#84bd01 258.5px)"></i>
<i style="top:224px;left:76px;width:260px;background:linear-gradient(90deg,#02bd75 0.5px,#34d87d 45.5px,#5aec80 81.5px,#73f77e 109.5px,#7ff979 128.5px,#85f871 142.5px,#86f66b 150.5px,#8aeb53 178.5px,#88d024 226.5px,#85bd01 259.5px)"></i>
<i style="top:225px;left:76px;width:261px;background:linear-gradient(90deg,#02bc76 0.5px,#39da7e 49.5px,#5fee80 86.5px,#6ff580 104.5px,#7ef97b 124.5px,#85f871 143.5px,#8aed58 174.5px,#8adb38 207.5px,#85bc01 260.5px)"></i>
<i style="top:226px;left:76px;width:262px;background:linear-gradient(90deg,#02bc76 0.5px,#3ddc7f 53.5px,#65f081 92.5px,#77f87f 114.5px,#7ef97c 125.5px,#86f872 143.5px,#8bed5a 173.5px,#8be040 200.5px,#86bc01 261.5px)"></i>
<i style="top:227px;left:76px;width:263px;background:linear-gradient(90deg,#02bc77 0.5px,#37d87e 47.5px,#5ceb82 83.5px,#75f780 111.5px,#81f97b 128.5px,#88f66d 151.5px,#8beb56 179.5px,#8bda36 211.5px,#86bb01 262.5px)"></i>
<i style="top:228px;left:76px;width:264px;background:linear-gradient(90deg,#02bb77 0.5px,#34d77f 45.5px,#61ee82 88.5px,#79f780 115.5px,#81f97c 129.5px,#89f66f 150.5px,#8ced5a 175.5px,#89cb1d 237.5px,#87bb01 263.5px)"></i>
<i style="top:229px;left:76px;width:265px;background:linear-gradient(90deg,#02bb78 0.5px,#36d77f 46.5px,#64ef83 91.5px,#7af781 116.5px,#83f97c 131.5px,#89f771 148.5px,#8dec5a 176.5px,#8cdc3b 208.5px,#87bb01 264.5px)"></i>
<i style="top:230px;left:76px;width:266px;background:linear-gradient(90deg,#02ba78 0.5px,#36d680 46.5px,#5ceb83 83.5px,#78f782 113.5px,#83f97d 131.5px,#8af672 149.5px,#8deb58 180.5px,#8ddb3c 209.5px,#88ba01 265.5px)"></i>
<i style="top:231px;left:76px;width:267px;background:linear-gradient(90deg,#02ba78 0.5px,#2acf7f 35.5px,#5cea84 82.5px,#75f583 109.5px,#82f97f 128.5px,#89f876 144.5px,#8eee60 172.5px,#8dd837 215.5px,#88ba01 266.5px)"></i>
<i style="top:232px;left:76px;width:268px;background:linear-gradient(90deg,#02b979 0.5px,#42dc82 57.5px,#66ef85 93.5px,#76f584 110.5px,#84f97f 130.5px,#8bf774 149.5px,#8eee5f 174.5px,#8dd635 218.5px,#89b901 267.5px)"></i>
<i style="top:233px;left:76px;width:269px;background:linear-gradient(90deg,#02b979 0.5px,#31d381 42.5px,#55e584 75.5px,#72f485 106.5px,#7bf784 116.5px,#84f980 130.5px,#8cf673 151.5px,#8feb5a 181.5px,#8ed432 222.5px,#89b901 268.5px)"></i>
<i style="top:234px;left:76px;width:270px;background:linear-gradient(90deg,#02b87a 0.5px,#51e385 71.5px,#74f485 107.5px,#81f982 125.5px,#8bf878 145.5px,#90ed61 175.5px,#8fde43 206.5px,#8ab802 269.5px)"></i>
<i style="top:235px;left:76px;width:271px;background:linear-gradient(90deg,#02b87a 0.5px,#39d683 49.5px,#69ef86 95.5px,#78f586 112.5px,#87f980 134.5px,#8ef572 155.5px,#90ee62 175.5px,#90da3e 212.5px,#8ab802 270.5px)"></i>
<i style="top:236px;left:76px;width:272px;background:linear-gradient(90deg,#02b77b 0.5px,#39d683 49.5px,#5be787 81.5px,#76f487 109.5px,#85f982 129.5px,#8df778 149.5px,#91ea5c 183.5px,#90d536 221.5px,#8bb802 271.5px)"></i>
<i style="top:237px;left:76px;width:274px;background:linear-gradient(90deg,#02b77b 0.5px,#3fd884 54.5px,#62eb88 88.5px,#78f487 111.5px,#86f983 130.5px,#8df779 149.5px,#92ed61 178.5px,#91d83c 216.5px,#8bb701 273.5px)"></i>
<i style="top:238px;left:76px;width:275px;background:linear-gradient(90deg,#02b67c 0.5px,#57e587 77.5px,#73f288 105.5px,#88f983 133.5px,#8df87b 147.5px,#92ef66 174.5px,#92db42 211.5px,#8cb601 274.5px)"></i>
<i style="top:239px;left:76px;width:276px;background:linear-gradient(90deg,#02b67c 0.5px,#3fd785 54.5px,#60e989 86.5px,#7bf588 114.5px,#89f983 134.5px,#90f676 155.5px,#93ec62 180.5px,#92d73a 220.5px,#8cb601 275.5px)"></i>
<i style="top:240px;left:76px;width:277px;background:linear-gradient(90deg,#02b57c 0.5px,#36d285 46.5px,#65eb89 90.5px,#80f788 120.5px,#8af983 137.5px,#91f577 156.5px,#94eb61 182.5px,#92d639 222.5px,#8db501 276.5px)"></i>
<i style="top:241px;left:76px;width:278px;background:linear-gradient(90deg,#02b57d 0.5px,#41d886 56.5px,#5fe78a 84.5px,#7af48a 113.5px,#88f986 131.5px,#90f77b 152.5px,#94ed65 179.5px,#93d539 223.5px,#8db501 277.5px)"></i>
<i style="top:242px;left:76px;width:279px;background:linear-gradient(90deg,#02b47d 0.5px,#40d787 55.5px,#66ea8b 91.5px,#79f48a 112.5px,#89f986 132.5px,#91f77c 152.5px,#95ed67 178.5px,#94e04d 205.5px,#8eb401 278.5px)"></i>
<i style="top:243px;left:76px;width:280px;background:linear-gradient(90deg,#02b47e 0.5px,#5ee68b 83.5px,#78f38b 110.5px,#8af987 133.5px,#92f67c 153.5px,#95ee69 177.5px,#95de4a 209.5px,#8fb401 279.5px)"></i>
<i style="top:244px;left:76px;width:281px;background:linear-gradient(90deg,#02b37e 0.5px,#37d187 47.5px,#5ee68b 83.5px,#7bf38c 113.5px,#8cf987 136.5px,#94f578 160.5px,#96e85f 189.5px,#95dd49 211.5px,#8fb401 280.5px)"></i>
<i style="top:245px;left:76px;width:282px;background:linear-gradient(90deg,#02b37f 0.5px,#57e18b 76.5px,#71ef8d 102.5px,#7ef48c 116.5px,#8bf988 135.5px,#92f880 149.5px,#95f376 164.5px,#97ec67 181.5px,#96e04f 206.5px,#90b301 281.5px)"></i>
<i style="top:246px;left:77px;width:282px;background:linear-gradient(90deg,#03b37f 0.5px,#3dd388 51.5px,#62e78d 86.5px,#7ff48d 116.5px,#8af88a 131.5px,#8ff986 139.5px,#94f67d 155.5px,#97ea64 185.5px,#97dc4a 211.5px,#90b301 281.5px)"></i>
<i style="top:247px;left:77px;width:283px;background:linear-gradient(90deg,#03b380 0.5px,#48d98a 61.5px,#69ea8e 93.5px,#81f58d 118.5px,#8af88b 130.5px,#90f986 141.5px,#94f67e 155.5px,#98eb66 184.5px,#97d944 218.5px,#91b201 282.5px)"></i>
<i style="top:248px;left:77px;width:284px;background:linear-gradient(90deg,#03b280 0.5px,#3dd289 51.5px,#61e68e 85.5px,#7cf28e 112.5px,#86f78d 125.5px,#8ef989 137.5px,#95f780 153.5px,#99eb67 184.5px,#97d843 220.5px,#91b201 283.5px)"></i>
<i style="top:249px;left:77px;width:285px;background:linear-gradient(90deg,#03b280 0.5px,#3bd18a 50.5px,#6cea8f 95.5px,#84f68e 122.5px,#8ff88a 138.5px,#96f680 155.5px,#99ee6c 179.5px,#97cf35 235.5px,#92b101 284.5px)"></i>
<i style="top:250px;left:77px;width:286px;background:linear-gradient(90deg,#03b181 0.5px,#3fd28b 53.5px,#67e88f 90.5px,#7af190 110.5px,#88f78e 126.5px,#91f88a 140.5px,#96f781 154.5px,#99ef6f 177.5px,#99d947 218.5px,#92b101 285.5px)"></i>
<i style="top:251px;left:77px;width:287px;background:linear-gradient(90deg,#03b181 0.5px,#35cc8a 44.5px,#64e68f 87.5px,#83f58f 120.5px,#92f88a 142.5px,#98f57f 159.5px,#9aec6a 184.5px,#9adc4d 213.5px,#93b101 286.5px)"></i>
<i style="top:252px;left:77px;width:288px;background:linear-gradient(90deg,#03b082 0.5px,#3fd28b 53.5px,#6dea91 96.5px,#87f690 124.5px,#93f88a 142.5px,#96f886 150.5px,#99f47e 162.5px,#9af175 173.5px,#9be660 196.5px,#93b001 287.5px)"></i>
<i style="top:253px;left:77px;width:289px;background:linear-gradient(90deg,#03b082 0.5px,#43d48d 57.5px,#6dea91 96.5px,#84f491 120.5px,#91f88d 139.5px,#98f784 155.5px,#9ced6e 182.5px,#9bda4c 217.5px,#94b001 288.5px)"></i>
<i style="top:254px;left:77px;width:290px;background:linear-gradient(90deg,#03af83 0.5px,#40d18d 54.5px,#68e791 91.5px,#85f591 122.5px,#93f88d 141.5px,#99f682 159.5px,#9cec6c 185.5px,#9cdd52 212.5px,#94af01 289.5px)"></i>
<i style="top:255px;left:77px;width:291px;background:linear-gradient(90deg,#03af83 0.5px,#43d38e 57.5px,#63e491 86.5px,#74ec93 103.5px,#87f592 123.5px,#94f88d 143.5px,#9af684 158.5px,#9dee71 181.5px,#9bd748 223.5px,#95af01 290.5px)"></i>
<i style="top:256px;left:77px;width:292px;background:linear-gradient(90deg,#02ae83 0.5px,#33c98b 42.5px,#62e392 85.5px,#82f393 118.5px,#8ff791 133.5px,#96f88d 145.5px,#9bf683 160.5px,#9df17a 172.5px,#9de35d 203.5px,#95ae01 291.5px)"></i>
<i style="top:257px;left:77px;width:293px;background:linear-gradient(90deg,#02ae84 0.5px,#3ccd8d 50.5px,#6ae793 93.5px,#84f394 120.5px,#95f88f 142.5px,#9bf686 158.5px,#9eec6e 186.5px,#9cd444 229.5px,#96ae01 292.5px)"></i>
<i style="top:258px;left:77px;width:294px;background:linear-gradient(90deg,#02ad84 0.5px,#3ccd8e 50.5px,#69e694 92.5px,#86f494 122.5px,#96f88f 143.5px,#99f88b 152.5px,#9cf582 164.5px,#9fec70 186.5px,#9ccc36 243.5px,#96ae01 293.5px)"></i>
<i style="top:259px;left:77px;width:295px;background:linear-gradient(90deg,#02ad85 0.5px,#4bd591 64.5px,#6ee794 96.5px,#85f395 120.5px,#92f792 136.5px,#96f890 144.5px,#9df585 162.5px,#9fec72 185.5px,#9fde56 213.5px,#97ad01 294.5px)"></i>
<i style="top:260px;left:77px;width:296px;background:linear-gradient(90deg,#02ac85 0.5px,#48d391 61.5px,#6fe895 97.5px,#84f296 119.5px,#97f891 144.5px,#9ef584 164.5px,#a0ed73 185.5px,#9dd040 236.5px,#98ad01 295.5px)"></i>
<i style="top:261px;left:77px;width:298px;background:linear-gradient(90deg,#02ac85 0.5px,#31c68e 41.5px,#6ae495 92.5px,#89f496 124.5px,#98f891 146.5px,#9ef584 165.5px,#a1ed75 184.5px,#9fd84d 224.5px,#98ac00 297.5px)"></i>
<i style="top:262px;left:78px;width:298px;background:linear-gradient(90deg,#03ac86 0.5px,#69e496 90.5px,#89f397 123.5px,#98f892 143.5px,#9cf78d 154.5px,#a0f27e 173.5px,#a1e465 201.5px,#98ab00 297.5px)"></i>
<i style="top:263px;left:78px;width:299px;background:linear-gradient(90deg,#03ab87 0.5px,#4fd593 66.5px,#73e997 100.5px,#8df497 127.5px,#99f893 144.5px,#9ff587 164.5px,#a2ec73 187.5px,#a1de5a 213.5px,#99ab01 298.5px)"></i>
<i style="top:264px;left:78px;width:300px;background:linear-gradient(90deg,#03ab87 0.5px,#45cf92 57.5px,#73e898 100.5px,#8bf498 125.5px,#9af893 145.5px,#a0f587 165.5px,#a3e86e 194.5px,#a0d54a 229.5px,#9aaa01 299.5px)"></i>
<i style="top:265px;left:78px;width:301px;background:linear-gradient(90deg,#03aa87 0.5px,#66e197 87.5px,#89f299 122.5px,#96f796 138.5px,#9af894 146.5px,#a0f68a 162.5px,#a3f07e 177.5px,#a3e364 205.5px,#9aaa01 300.5px)"></i>
<i style="top:266px;left:78px;width:302px;background:linear-gradient(90deg,#03aa88 0.5px,#59d996 75.5px,#7bec99 108.5px,#91f598 131.5px,#97f797 140.5px,#9ef892 152.5px,#a3f283 172.5px,#a4e76c 198.5px,#9ba901 301.5px)"></i>
<i style="top:267px;left:78px;width:303px;background:linear-gradient(90deg,#03a988 0.5px,#45ce93 57.5px,#6de499 94.5px,#8df39a 127.5px,#9af896 143.5px,#a2f58b 164.5px,#a4eb76 189.5px,#a3d64f 227.5px,#9ba901 302.5px)"></i>
<i style="top:268px;left:78px;width:304px;background:linear-gradient(90deg,#03a989 0.5px,#4fd395 66.5px,#71e69a 98.5px,#8ef39a 127.5px,#9cf896 146.5px,#a2f68c 163.5px,#a5ec78 188.5px,#a4d955 223.5px,#9ca901 303.5px)"></i>
<i style="top:269px;left:78px;width:305px;background:linear-gradient(90deg,#03a889 0.5px,#3dc993 50.5px,#6ee49a 95.5px,#90f49b 129.5px,#9df897 147.5px,#a4f48a 168.5px,#a6e870 197.5px,#9ca801 304.5px)"></i>
<i style="top:270px;left:78px;width:306px;background:linear-gradient(90deg,#03a889 0.5px,#4ad095 62.5px,#73e59b 99.5px,#8bf29c 124.5px,#96f69a 136.5px,#9ef897 149.5px,#a5f489 170.5px,#a6ed7c 186.5px,#a6e56b 203.5px,#9da801 305.5px)"></i>
<i style="top:271px;left:78px;width:307px;background:linear-gradient(90deg,#03a78a 0.5px,#4fd297 66.5px,#72e49b 98.5px,#88f09c 120.5px,#93f49c 132.5px,#9df898 147.5px,#a3f792 159.5px,#a7ed7d 186.5px,#a6df61 214.5px,#9da701 306.5px)"></i>
<i style="top:272px;left:78px;width:308px;background:linear-gradient(90deg,#03a78a 0.5px,#4dd197 65.5px,#71e39c 97.5px,#8ff39d 128.5px,#9bf79b 142.5px,#a1f897 153.5px,#a7f186 177.5px,#a8e873 197.5px,#9ea701 307.5px)"></i>
<i style="top:273px;left:78px;width:309px;background:linear-gradient(90deg,#03a68b 0.5px,#70e39c 96.5px,#8df19e 125.5px,#9ff899 149.5px,#a3f796 156.5px,#a7f38b 172.5px,#a8e670 202.5px,#9ea601 308.5px)"></i>
<i style="top:274px;left:78px;width:310px;background:linear-gradient(90deg,#03a68b 0.5px,#46cb97 58.5px,#6fe29c 95.5px,#91f29e 129.5px,#a0f89a 150.5px,#a6f691 165.5px,#a8f289 175.5px,#a9e46e 205.5px,#9fa601 309.5px)"></i>
<i style="top:275px;left:79px;width:310px;background:linear-gradient(90deg,#04a68c 0.5px,#46cb97 57.5px,#75e59e 100.5px,#92f39f 129.5px,#a1f79b 149.5px,#a6f692 164.5px,#a9f188 177.5px,#a9e875 198.5px,#a8d757 227.5px,#9fa601 309.5px)"></i>
<i style="top:276px;left:79px;width:311px;background:linear-gradient(90deg,#04a58c 0.5px,#40c797 52.5px,#74e49e 99.5px,#94f39f 131.5px,#9df79d 143.5px,#a2f79b 151.5px,#a8f590 168.5px,#aae672 202.5px,#a0a501 310.5px)"></i>
<i style="top:277px;left:79px;width:312px;background:linear-gradient(90deg,#04a58c 0.5px,#50cf9a 66.5px,#7ce89f 107.5px,#98f59f 136.5px,#a4f79b 153.5px,#aaf28a 177.5px,#aae46f 206.5px,#a0a501 311.5px)"></i>
<i style="top:278px;left:79px;width:313px;background:linear-gradient(90deg,#04a48d 0.5px,#46c998 57.5px,#79e6a0 104.5px,#97f4a0 134.5px,#a2f79d 150.5px,#aaf48f 172.5px,#abe877 199.5px,#a1a401 312.5px)"></i>
<i style="top:279px;left:79px;width:314px;background:linear-gradient(90deg,#04a48d 0.5px,#4fce9a 65.5px,#78e5a0 103.5px,#91f1a1 127.5px,#9ff79f 145.5px,#a4f79d 152.5px,#aaf592 169.5px,#abf18a 180.5px,#ace674 203.5px,#a1a401 313.5px)"></i>
<i style="top:280px;left:79px;width:315px;background:linear-gradient(90deg,#04a38e 0.5px,#4fcd9b 65.5px,#75e3a0 100.5px,#93f1a2 129.5px,#9af5a1 138.5px,#a4f79e 152.5px,#aaf696 166.5px,#ade97b 197.5px,#a2a301 314.5px)"></i>
<i style="top:281px;left:79px;width:316px;background:linear-gradient(90deg,#04a38e 0.5px,#51ce9c 67.5px,#7ee7a1 108.5px,#96f3a2 133.5px,#a6f79e 154.5px,#abf491 173.5px,#ade879 200.5px,#a2a301 315.5px)"></i>
<i style="top:282px;left:79px;width:317px;background:linear-gradient(90deg,#03a28e 0.5px,#42c69a 54.5px,#7be5a2 105.5px,#97f2a3 133.5px,#9ff6a2 143.5px,#a7f79e 156.5px,#acf595 170.5px,#adf18e 179.5px,#aee676 204.5px,#a3a201 316.5px)"></i>
<i style="top:283px;left:79px;width:318px;background:linear-gradient(90deg,#03a28f 0.5px,#4fcc9c 65.5px,#7ee6a3 108.5px,#9af4a3 137.5px,#a2f6a2 147.5px,#a8f79e 156.5px,#aaf69b 163.5px,#aef28f 179.5px,#aee575 206.5px,#a3a201 317.5px)"></i>
<i style="top:284px;left:79px;width:319px;background:linear-gradient(90deg,#03a18f 0.5px,#4fcc9c 65.5px,#77e1a2 101.5px,#92f0a4 128.5px,#9ff5a3 142.5px,#a6f7a1 153.5px,#aaf79c 162.5px,#aef393 175.5px,#afe97d 199.5px,#acd154 240.5px,#a4a201 318.5px)"></i>
<i style="top:285px;left:79px;width:320px;background:linear-gradient(90deg,#03a190 0.5px,#58d09e 73.5px,#7fe6a4 109.5px,#9cf3a4 138.5px,#a8f7a1 155.5px,#abf79c 163.5px,#aff291 178.5px,#afe679 205.5px,#a5a101 319.5px)"></i>
<i style="top:286px;left:80px;width:320px;background:linear-gradient(90deg,#04a190 0.5px,#50cb9e 65.5px,#87e9a5 115.5px,#98f2a5 133.5px,#a2f5a4 144.5px,#a9f7a1 156.5px,#adf69a 167.5px,#b0f190 180.5px,#b0e171 213.5px,#a5a101 319.5px)"></i>
<i style="top:287px;left:80px;width:321px;background:linear-gradient(90deg,#04a091 0.5px,#40c29b 51.5px,#7be3a4 104.5px,#9ef4a6 139.5px,#aaf7a2 156.5px,#aff496 174.5px,#b1e980 199.5px,#a6a001 320.5px)"></i>
<i style="top:288px;left:80px;width:322px;background:linear-gradient(90deg,#04a091 0.5px,#40c19c 51.5px,#7ae2a5 103.5px,#98f1a7 132.5px,#aaf7a3 155.5px,#b1f293 179.5px,#b1e77d 203.5px,#a6a001 321.5px)"></i>
<i style="top:289px;left:80px;width:323px;background:linear-gradient(90deg,#049f91 0.5px,#48c59e 58.5px,#83e6a6 111.5px,#9af2a7 135.5px,#aaf7a4 155.5px,#aef7a0 163.5px,#b1f397 175.5px,#b2e57a 207.5px,#a79f01 322.5px)"></i>
<i style="top:290px;left:80px;width:324px;background:linear-gradient(90deg,#049f92 0.5px,#48c59e 58.5px,#82e5a7 110.5px,#9df2a8 137.5px,#abf7a4 157.5px,#b1f59b 172.5px,#b3e67d 205.5px,#a79f01 323.5px)"></i>
<i style="top:291px;left:80px;width:326px;background:linear-gradient(90deg,#049e92 0.5px,#54cba1 69.5px,#86e7a7 114.5px,#9af1a9 134.5px,#acf7a5 157.5px,#b2f49a 174.5px,#b3e77f 204.5px,#a89e00 325.5px)"></i>
<i style="top:292px;left:80px;width:327px;background:linear-gradient(90deg,#049e93 0.5px,#57cda2 72.5px,#80e3a7 108.5px,#a0f3a9 140.5px,#adf7a5 159.5px,#b1f69f 168.5px,#b3f296 181.5px,#b4e37a 210.5px,#a89d00 326.5px)"></i>
<i style="top:293px;left:80px;width:328px;background:linear-gradient(90deg,#049d93 0.5px,#51c9a1 66.5px,#80e2a8 108.5px,#97efaa 131.5px,#a2f3a9 142.5px,#acf7a7 156.5px,#b0f7a3 163.5px,#b4f398 179.5px,#b5e782 203.5px,#b2d562 235.5px,#a99d00 327.5px)"></i>
<i style="top:294px;left:80px;width:329px;background:linear-gradient(90deg,#049d93 0.5px,#59cda3 73.5px,#82e3a9 110.5px,#a1f3aa 141.5px,#aef7a7 158.5px,#b3f59f 171.5px,#b4f298 181.5px,#b5e781 205.5px,#b3d461 237.5px,#a99d00 328.5px)"></i>
<i style="top:295px;left:80px;width:330px;background:linear-gradient(90deg,#049c94 0.5px,#7fe1a9 107.5px,#9befab 134.5px,#aef7a8 158.5px,#b5f39b 178.5px,#b6e886 202.5px,#b4d766 233.5px,#aa9c00 329.5px)"></i>
<i style="top:296px;left:81px;width:330px;background:linear-gradient(90deg,#059c94 0.5px,#65d3a5 83.5px,#8ee8ab 120.5px,#a6f4ab 145.5px,#aff7a8 159.5px,#b5f49e 174.5px,#b7eb8a 197.5px,#b3d25f 240.5px,#aa9c00 329.5px)"></i>
<i style="top:297px;left:81px;width:331px;background:linear-gradient(90deg,#059c95 0.5px,#63d1a6 81.5px,#8ce7ab 118.5px,#a7f4ac 146.5px,#b2f7a7 163.5px,#b7f198 183.5px,#b7e784 205.5px,#ab9b01 330.5px)"></i>
<i style="top:298px;left:81px;width:332px;background:linear-gradient(90deg,#059b95 0.5px,#5ccda5 75.5px,#82e1ab 109.5px,#a2f1ad 140.5px,#b0f7a9 159.5px,#b7f39d 179.5px,#b8e785 205.5px,#ab9b01 331.5px)"></i>
<i style="top:299px;left:81px;width:333px;background:linear-gradient(90deg,#059b96 0.5px,#54c8a4 68.5px,#8ae5ac 116.5px,#9aeead 132.5px,#aaf4ad 149.5px,#b3f7a8 164.5px,#b8f19a 184.5px,#b8e17c 215.5px,#ac9a01 332.5px)"></i>
<i style="top:300px;left:81px;width:334px;background:linear-gradient(90deg,#059a96 0.5px,#5ccca6 75.5px,#8be5ad 117.5px,#a6f3ae 144.5px,#b2f7aa 161.5px,#b7f5a3 173.5px,#b8f19b 184.5px,#b9e482 210.5px,#ac9a01 333.5px)"></i>
<i style="top:301px;left:81px;width:335px;background:linear-gradient(90deg,#059a96 0.5px,#3bb9a1 47.5px,#89e4ad 115.5px,#a7f3ae 145.5px,#b3f7ab 162.5px,#b8f4a0 178.5px,#bae88a 203.5px,#ad9a01 334.5px)"></i>
<i style="top:302px;left:81px;width:336px;background:linear-gradient(90deg,#049997 0.5px,#80dfac 107.5px,#a5f2af 143.5px,#b2f6ad 159.5px,#b8f5a4 175.5px,#baea8d 201.5px,#ad9901 335.5px)"></i>
<i style="top:303px;left:81px;width:337px;background:linear-gradient(90deg,#049997 0.5px,#6bd2aa 88.5px,#8ce5ae 118.5px,#9aecb0 132.5px,#abf4af 149.5px,#b5f6ac 164.5px,#baf29e 184.5px,#bbe88a 205.5px,#ae9901 336.5px)"></i>
<i style="top:304px;left:81px;width:338px;background:linear-gradient(90deg,#049897 0.5px,#5bc9a7 74.5px,#8be4af 117.5px,#a4f1b0 142.5px,#b4f6ae 161.5px,#baf4a3 179.5px,#bbe687 209.5px,#ae9801 337.5px)"></i>
<i style="top:305px;left:82px;width:338px;background:linear-gradient(90deg,#059898 0.5px,#4cc0a5 60.5px,#8ae3af 115.5px,#a7f2b1 144.5px,#b5f6ae 161.5px,#baf4a5 177.5px,#bcea8f 201.5px,#b9d56c 236.5px,#af9801 337.5px)"></i>
<i style="top:306px;left:82px;width:339px;background:linear-gradient(90deg,#059898 0.5px,#51c3a7 65.5px,#89e2af 114.5px,#a8f2b2 145.5px,#b6f6af 162.5px,#bbf5a7 175.5px,#bde88d 205.5px,#af9701 338.5px)"></i>
<i style="top:307px;left:82px;width:340px;background:linear-gradient(90deg,#059799 0.5px,#88e1b0 113.5px,#a7f1b2 143.5px,#b7f6af 163.5px,#bcf3a3 182.5px,#bde78c 207.5px,#b09701 339.5px)"></i>
<i style="top:308px;left:82px;width:341px;background:linear-gradient(90deg,#059799 0.5px,#87e0b0 112.5px,#aaf2b3 146.5px,#b9f6af 166.5px,#bcf5a8 176.5px,#beea92 202.5px,#b09601 340.5px)"></i>
<i style="top:309px;left:82px;width:342px;background:linear-gradient(90deg,#05969a 0.5px,#6dd1ad 89.5px,#93e6b2 123.5px,#abf2b3 147.5px,#b7f6b1 162.5px,#bef3a5 182.5px,#bee88f 206.5px,#b19601 341.5px)"></i>
<i style="top:310px;left:82px;width:343px;background:linear-gradient(90deg,#05959a 0.5px,#4bbea7 60.5px,#93e5b3 123.5px,#aef3b4 150.5px,#b8f6b1 163.5px,#bdf4aa 177.5px,#bfee9c 194.5px,#bdd670 237.5px,#b19601 342.5px)"></i>
<i style="top:311px;left:82px;width:344px;background:linear-gradient(90deg,#05959a 0.5px,#4bbda8 60.5px,#91e4b3 121.5px,#b0f3b4 152.5px,#b9f6b2 165.5px,#bdf5ad 173.5px,#bff2a4 186.5px,#c0e68e 209.5px,#b29501 343.5px)"></i>
<i style="top:312px;left:82px;width:345px;background:linear-gradient(90deg,#05949b 0.5px,#66ccad 83.5px,#93e4b4 123.5px,#adf2b5 149.5px,#baf6b2 165.5px,#bcf6b0 171.5px,#c0f2a6 185.5px,#c0e891 207.5px,#b29501 344.5px)"></i>
<i style="top:313px;left:83px;width:345px;background:linear-gradient(90deg,#06959b 0.5px,#46b9a8 55.5px,#91e3b4 120.5px,#b0f3b6 151.5px,#bcf6b2 168.5px,#c1f1a5 186.5px,#c1e790 208.5px,#b39401 344.5px)"></i>
<i style="top:314px;left:83px;width:346px;background:linear-gradient(90deg,#06949c 0.5px,#66cbae 82.5px,#93e3b5 122.5px,#adf1b6 147.5px,#b6f5b6 158.5px,#bdf6b2 168.5px,#c0f4ac 179.5px,#c2eb98 201.5px,#bfd979 232.5px,#b49401 345.5px)"></i>
<i style="top:315px;left:83px;width:347px;background:linear-gradient(90deg,#06939c 0.5px,#5ac4ac 72.5px,#90e1b5 119.5px,#aff1b7 149.5px,#baf6b5 163.5px,#c1f4ad 179.5px,#c2e995 205.5px,#b49301 346.5px)"></i>
<i style="top:316px;left:83px;width:348px;background:linear-gradient(90deg,#06939c 0.5px,#93e3b6 122.5px,#b1f2b8 151.5px,#bdf6b5 167.5px,#c3f1a6 189.5px,#c3e792 209.5px,#b59301 347.5px)"></i>
<i style="top:317px;left:83px;width:349px;background:linear-gradient(90deg,#06929d 0.5px,#5ac3ad 72.5px,#9ce7b7 130.5px,#b3f2b8 153.5px,#bef6b5 169.5px,#c3f3ab 184.5px,#c4ea9a 203.5px,#b59301 348.5px)"></i>
<i style="top:318px;left:83px;width:350px;background:linear-gradient(90deg,#06929d 0.5px,#5cc3ae 74.5px,#96e4b7 125.5px,#b5f3b9 155.5px,#bff6b6 169.5px,#c4f2a9 187.5px,#c4e998 206.5px,#b69201 349.5px)"></i>
<i style="top:319px;left:83px;width:351px;background:linear-gradient(90deg,#05919e 0.5px,#90e0b7 119.5px,#aef0ba 148.5px,#bff6b7 168.5px,#c5f1a8 190.5px,#c4e795 210.5px,#b69201 350.5px)"></i>
<i style="top:320px;left:83px;width:352px;background:linear-gradient(90deg,#05919e 0.5px,#5fc4af 76.5px,#9ce6b9 130.5px,#b9f4ba 160.5px,#c1f6b6 171.5px,#c5f2ab 188.5px,#c4e08b 221.5px,#b79101 351.5px)"></i>
<i style="top:321px;left:84px;width:352px;background:linear-gradient(90deg,#06919f 0.5px,#8adcb7 113.5px,#b4f2bb 153.5px,#bff5b9 166.5px,#c4f5b3 178.5px,#c6e99a 206.5px,#b79101 351.5px)"></i>
<i style="top:322px;left:84px;width:353px;background:linear-gradient(90deg,#06909f 0.5px,#8fdeb8 117.5px,#b2f0bb 150.5px,#c0f6b9 168.5px,#c4f5b6 175.5px,#c6f2ae 186.5px,#c7e99b 206.5px,#b89001 352.5px)"></i>
<i style="top:323px;left:84px;width:354px;background:linear-gradient(90deg,#06909f 0.5px,#99e3ba 126.5px,#b5f1bc 153.5px,#c2f6b9 171.5px,#c7f2af 186.5px,#c7e493 215.5px,#b89001 353.5px)"></i>
<i style="top:324px;left:84px;width:355px;background:linear-gradient(90deg,#068fa0 0.5px,#69c8b2 84.5px,#9ce4bb 129.5px,#b7f2bd 155.5px,#c2f6ba 169.5px,#c7f2b0 186.5px,#c8e99c 207.5px,#b98f01 354.5px)"></i>
<i style="top:325px;left:84px;width:357px;background:linear-gradient(90deg,#068fa0 0.5px,#99e2bb 126.5px,#b9f2bd 157.5px,#c3f6bb 170.5px,#c8f3b1 186.5px,#c8e89b 209.5px,#b98e00 356.5px)"></i>
<i style="top:326px;left:84px;width:358px;background:linear-gradient(90deg,#068ea0 0.5px,#92deba 120.5px,#b6f1be 154.5px,#c3f5bc 170.5px,#c7f5b6 180.5px,#c9f1ae 191.5px,#c9eba1 204.5px,#c7da84 233.5px,#ba8e00 357.5px)"></i>
<i style="top:327px;left:84px;width:359px;background:linear-gradient(90deg,#068ea1 0.5px,#99e1bc 126.5px,#bcf3be 160.5px,#c4f6bc 172.5px,#c9f4b4 184.5px,#cae89d 209.5px,#ba8e00 358.5px)"></i>
<i style="top:328px;left:84px;width:360px;background:linear-gradient(90deg,#068da1 0.5px,#70c9b5 90.5px,#a0e5bd 133.5px,#bef4bf 163.5px,#c6f5bc 174.5px,#caf2b0 190.5px,#cae89e 210.5px,#bb8d00 359.5px)"></i>
<i style="top:329px;left:85px;width:360px;background:linear-gradient(90deg,#078da2 0.5px,#64c2b4 79.5px,#9fe4bd 131.5px,#b4efc0 151.5px,#bff3bf 162.5px,#c7f5bc 175.5px,#cbf0ad 194.5px,#cbe69c 212.5px,#bb8d00 359.5px)"></i>
<i style="top:330px;left:85px;width:361px;background:linear-gradient(90deg,#078da2 0.5px,#9ee3be 130.5px,#b5eec0 151.5px,#bef3c0 161.5px,#c6f5be 172.5px,#caf4b7 184.5px,#cceaa3 206.5px,#bc8c00 360.5px)"></i>
<i style="top:331px;left:85px;width:362px;background:linear-gradient(90deg,#078ca3 0.5px,#94ddbd 121.5px,#b1ecc0 147.5px,#bcf2c1 159.5px,#c7f5bf 172.5px,#ccf2b3 190.5px,#cce8a0 210.5px,#bc8c00 361.5px)"></i>
<i style="top:332px;left:85px;width:363px;background:linear-gradient(90deg,#078ca3 0.5px,#99dfbe 125.5px,#b9f0c1 155.5px,#c8f5bf 173.5px,#cbf5bb 181.5px,#cdf1b3 191.5px,#cce79f 212.5px,#bd8b01 362.5px)"></i>
<i style="top:333px;left:85px;width:364px;background:linear-gradient(90deg,#078ba3 0.5px,#a2e3c0 133.5px,#bff2c2 161.5px,#c8f5c0 174.5px,#ccf4b9 185.5px,#ceeca9 203.5px,#bd8b01 363.5px)"></i>
<i style="top:334px;left:85px;width:365px;background:linear-gradient(90deg,#068aa4 0.5px,#9ce0bf 128.5px,#b8eec3 154.5px,#c8f5c1 172.5px,#cdf3b8 188.5px,#cee9a4 209.5px,#be8a01 364.5px)"></i>
<i style="top:335px;left:85px;width:366px;background:linear-gradient(90deg,#068aa4 0.5px,#57b8b3 68.5px,#a0e2c0 132.5px,#b9efc3 155.5px,#c9f5c2 173.5px,#cdf5bd 182.5px,#cff1b4 193.5px,#cee7a1 213.5px,#be8a01 365.5px)"></i>
<i style="top:336px;left:86px;width:366px;background:linear-gradient(90deg,#078aa5 0.5px,#9cdfc0 127.5px,#b7edc4 152.5px,#caf5c2 173.5px,#cff3ba 187.5px,#cfeaa7 207.5px,#bf8a01 365.5px)"></i>
<i style="top:337px;left:86px;width:367px;background:linear-gradient(90deg,#078aa5 0.5px,#65bfb7 79.5px,#a0e1c1 131.5px,#b1eac4 146.5px,#c1f2c4 162.5px,#cbf5c3 174.5px,#cef5bf 181.5px,#d0f1b7 192.5px,#d0e9a6 209.5px,#bf8901 366.5px)"></i>
<i style="top:338px;left:86px;width:368px;background:linear-gradient(90deg,#0789a5 0.5px,#9fe0c2 130.5px,#c2f2c5 163.5px,#ccf5c3 175.5px,#d0f3bc 187.5px,#d1ecac 204.5px,#c08901 367.5px)"></i>
<i style="top:339px;left:86px;width:369px;background:linear-gradient(90deg,#0788a6 0.5px,#9cddc2 127.5px,#bbeec6 156.5px,#cbf5c4 173.5px,#cff4c0 183.5px,#d1f1b7 194.5px,#d1eaab 207.5px,#c08801 368.5px)"></i>
<i style="top:340px;left:86px;width:370px;background:linear-gradient(90deg,#0788a6 0.5px,#9fdfc3 130.5px,#baedc6 154.5px,#ccf5c5 174.5px,#d2f2ba 192.5px,#d1e6a4 215.5px,#c18801 369.5px)"></i>
<i style="top:341px;left:86px;width:371px;background:linear-gradient(90deg,#0787a6 0.5px,#96d9c2 122.5px,#b8ebc6 152.5px,#ccf5c6 174.5px,#d1f4c0 186.5px,#d3ecb0 204.5px,#c28701 370.5px)"></i>
<i style="top:342px;left:86px;width:372px;background:linear-gradient(90deg,#0787a7 0.5px,#83cebe 105.5px,#a6e1c5 136.5px,#bbedc7 155.5px,#cef5c6 176.5px,#d2f4c1 186.5px,#d3ebae 207.5px,#c28701 371.5px)"></i>
<i style="top:343px;left:87px;width:372px;background:linear-gradient(90deg,#0887a7 0.5px,#a7e2c5 136.5px,#c6f2c8 165.5px,#d0f5c6 178.5px,#d4f1bb 193.5px,#d3e9ab 210.5px,#c38701 371.5px)"></i>
<i style="top:344px;left:87px;width:373px;background:linear-gradient(90deg,#0886a8 0.5px,#9adac3 124.5px,#c0eec9 159.5px,#d0f5c7 177.5px,#d4f3c0 189.5px,#d4e8aa 212.5px,#c38601 372.5px)"></i>
<i style="top:345px;left:87px;width:374px;background:linear-gradient(90deg,#0886a8 0.5px,#abe3c7 139.5px,#c3f0c9 162.5px,#cdf4c9 173.5px,#d2f5c6 180.5px,#d5f1bc 195.5px,#d3e09e 225.5px,#c48601 373.5px)"></i>
<i style="top:346px;left:87px;width:375px;background:linear-gradient(90deg,#0885a8 0.5px,#a2ddc6 131.5px,#bcecc9 155.5px,#cdf3ca 172.5px,#d0f5c9 177.5px,#d5f3c2 188.5px,#d6ebb2 206.5px,#c48501 374.5px)"></i>
<i style="top:347px;left:87px;width:376px;background:linear-gradient(90deg,#0885a9 0.5px,#82cbc1 104.5px,#abe2c7 139.5px,#c6f0cb 165.5px,#d2f5c9 179.5px,#d6f1bf 194.5px,#d6e6aa 215.5px,#c58501 375.5px)"></i>
<i style="top:348px;left:87px;width:377px;background:linear-gradient(90deg,#0784a9 0.5px,#77c4bf 94.5px,#a9e1c8 138.5px,#ccf3cb 171.5px,#d2f4ca 178.5px,#d6f4c4 188.5px,#d7ebb2 208.5px,#c58401 376.5px)"></i>
<i style="top:349px;left:87px;width:378px;background:linear-gradient(90deg,#0784a9 0.5px,#64b9bc 78.5px,#abe1c8 139.5px,#c4eecc 162.5px,#d4f5ca 181.5px,#d7f2c2 193.5px,#d7e6aa 217.5px,#c68401 377.5px)"></i>
<i style="top:350px;left:88px;width:378px;background:linear-gradient(90deg,#0884aa 0.5px,#a3dcc8 131.5px,#bfeccc 157.5px,#ccf2cc 169.5px,#d4f5cb 179.5px,#d8f2c3 192.5px,#d8e9b1 211.5px,#c68401 377.5px)"></i>
<i style="top:351px;left:88px;width:379px;background:linear-gradient(90deg,#0883aa 0.5px,#7fc7c1 100.5px,#b2e4cb 145.5px,#c0ebcc 157.5px,#d1f4cd 175.5px,#d6f5ca 182.5px,#d8f2c4 192.5px,#d8e7af 214.5px,#c78301 378.5px)"></i>
<i style="top:352px;left:88px;width:380px;background:linear-gradient(90deg,#0883ab 0.5px,#ade1ca 140.5px,#c5eecd 162.5px,#d4f4cd 178.5px,#d8f4c8 188.5px,#d9eab4 210.5px,#c78301 379.5px)"></i>
<i style="top:353px;left:88px;width:381px;background:linear-gradient(90deg,#0882ab 0.5px,#b4e4cc 146.5px,#d1f3ce 174.5px,#d6f5cc 182.5px,#daf2c5 193.5px,#dae9b3 212.5px,#c88201 380.5px)"></i>
<i style="top:354px;left:88px;width:382px;background:linear-gradient(90deg,#0881ac 0.5px,#a0d9c9 129.5px,#c1ebce 158.5px,#d6f4ce 180.5px,#d9f4c9 189.5px,#dbf1c3 197.5px,#daecb9 207.5px,#c88201 381.5px)"></i>
<i style="top:355px;left:88px;width:383px;background:linear-gradient(90deg,#0881ac 0.5px,#b5e4cd 147.5px,#cdf1cf 170.5px,#d9f4cd 185.5px,#dbf2c5 195.5px,#dae7b1 216.5px,#c98101 382.5px)"></i>
<i style="top:356px;left:88px;width:385px;background:linear-gradient(90deg,#0880ac 0.5px,#b0e1cc 143.5px,#d0f2d0 173.5px,#d9f4ce 184.5px,#dbf3c8 193.5px,#dbe9b5 213.5px,#c98000 384.5px)"></i>
<i style="top:357px;left:89px;width:385px;background:linear-gradient(90deg,#0980ad 0.5px,#acdecc 138.5px,#ccefd1 168.5px,#d6f4d0 179.5px,#daf4ce 184.5px,#dcf2c7 195.5px,#dce8b4 214.5px,#ca8000 384.5px)"></i>
<i style="top:358px;left:89px;width:386px;background:linear-gradient(90deg,#0980ad 0.5px,#b5e2ce 146.5px,#cef0d1 169.5px,#d9f4d0 183.5px,#ddf2c8 195.5px,#dde8b6 213.5px,#ca7f00 385.5px)"></i>
<i style="top:359px;left:89px;width:387px;background:linear-gradient(90deg,#097fae 0.5px,#b8e4cf 149.5px,#d3f2d2 174.5px,#dbf4d0 185.5px,#def1c6 198.5px,#dde6b2 218.5px,#cb7f00 386.5px)"></i>
<i style="top:360px;left:89px;width:388px;background:linear-gradient(90deg,#097fae 0.5px,#bde6d0 153.5px,#d5f2d2 176.5px,#dbf4d1 185.5px,#def2c9 196.5px,#dee7b5 216.5px,#cb7f00 387.5px)"></i>
<i style="top:361px;left:89px;width:389px;background:linear-gradient(90deg,#087eae 0.5px,#b6e1d0 147.5px,#c6ebd2 162.5px,#d9f4d3 181.5px,#dcf4d1 185.5px,#dff2ca 196.5px,#dfe9bb 212.5px,#cc7e00 388.5px)"></i>
<i style="top:362px;left:89px;width:390px;background:linear-gradient(90deg,#087eaf 0.5px,#c0e7d2 156.5px,#d5f2d4 176.5px,#ddf4d2 186.5px,#dff3cd 194.5px,#dfeabc 212.5px,#cc7e00 389.5px)"></i>
<i style="top:363px;left:90px;width:390px;background:linear-gradient(90deg,#097eaf 0.5px,#77bcc5 92.5px,#bce4d2 152.5px,#d6f2d4 176.5px,#def4d2 186.5px,#e0f2cb 196.5px,#dfe7b8 216.5px,#cd7d00 389.5px)"></i>
<i style="top:364px;left:90px;width:391px;background:linear-gradient(90deg,#097daf 0.5px,#aedbcf 139.5px,#cbecd4 165.5px,#dbf3d5 181.5px,#ddf4d4 185.5px,#e1f2cd 195.5px,#e1ebbf 210.5px,#cd7d00 390.5px)"></i>
<i style="top:365px;left:90px;width:392px;background:linear-gradient(90deg,#097db0 0.5px,#bfe5d3 154.5px,#d5f1d5 175.5px,#dff4d4 187.5px,#e2f0ca 200.5px,#e1eabe 212.5px,#ce7c00 391.5px)"></i>
<i style="top:366px;left:90px;width:393px;background:linear-gradient(90deg,#097cb0 0.5px,#b7e0d2 147.5px,#cfedd6 169.5px,#dff4d5 186.5px,#e2f3d0 194.5px,#e1e9bd 214.5px,#ce7c00 392.5px)"></i>
<i style="top:367px;left:90px;width:394px;background:linear-gradient(90deg,#097bb1 0.5px,#b6ded2 146.5px,#cdecd6 167.5px,#d9f1d7 178.5px,#e0f4d5 188.5px,#e3f2cf 197.5px,#e3ecc4 208.5px,#cf7b01 393.5px)"></i>
<i style="top:368px;left:90px;width:395px;background:linear-gradient(90deg,#097bb1 0.5px,#bae1d3 150.5px,#cfecd7 169.5px,#d8f1d7 177.5px,#e1f4d6 188.5px,#e3f1cd 200.5px,#e2e7bb 218.5px,#d07b01 394.5px)"></i>
<i style="top:369px;left:91px;width:395px;background:linear-gradient(90deg,#0a7bb1 0.5px,#b7ded3 146.5px,#d3eed7 171.5px,#e1f4d7 187.5px,#e4f2d0 197.5px,#e4eac2 211.5px,#d07b01 394.5px)"></i>
<i style="top:370px;left:91px;width:396px;background:linear-gradient(90deg,#0a7ab2 0.5px,#bae0d4 149.5px,#cfebd8 168.5px,#e1f4d8 186.5px,#e4f2d3 195.5px,#e5edc8 206.5px,#d17a01 395.5px)"></i>
<i style="top:371px;left:91px;width:397px;background:linear-gradient(90deg,#0a7ab2 0.5px,#b0d9d3 140.5px,#d0ebd8 168.5px,#e1f4d9 186.5px,#e5f3d4 194.5px,#e5e9c1 214.5px,#d17a01 396.5px)"></i>
<i style="top:372px;left:91px;width:398px;background:linear-gradient(90deg,#0a79b2 0.5px,#b2dad4 142.5px,#d0ebd9 168.5px,#e2f4d9 187.5px,#e6f2d2 198.5px,#e6ebc7 210.5px,#d27901 397.5px)"></i>
<i style="top:373px;left:91px;width:399px;background:linear-gradient(90deg,#0979b3 0.5px,#b5dbd5 145.5px,#d4edda 172.5px,#e4f4d9 189.5px,#e6f3d6 195.5px,#e6eac5 213.5px,#d27901 398.5px)"></i>
<i style="top:374px;left:91px;width:400px;background:linear-gradient(90deg,#0978b3 0.5px,#c7e5d8 160.5px,#d8eedb 176.5px,#e4f4da 189.5px,#e7f2d3 199.5px,#e7eac6 213.5px,#d37801 399.5px)"></i>
<i style="top:375px;left:92px;width:400px;background:linear-gradient(90deg,#0a78b4 0.5px,#b0d8d5 140.5px,#d0e9da 167.5px,#ddf1dc 180.5px,#e6f4da 190.5px,#e8f1d4 199.5px,#e7e8c3 216.5px,#d37801 399.5px)"></i>
<i style="top:376px;left:92px;width:401px;background:linear-gradient(90deg,#0a78b4 0.5px,#c0e0d8 153.5px,#d8eedc 175.5px,#e7f4db 191.5px,#e8ecca 210.5px,#d47801 400.5px)"></i>
<i style="top:377px;left:92px;width:402px;background:linear-gradient(90deg,#0a77b4 0.5px,#c8e4da 160.5px,#daeedc 176.5px,#e6f4dc 190.5px,#e9f3d8 196.5px,#e9ebca 211.5px,#d47701 401.5px)"></i>
<i style="top:378px;left:92px;width:403px;background:linear-gradient(90deg,#0a77b5 0.5px,#cde7db 165.5px,#e2f2dd 184.5px,#e7f3dd 190.5px,#e9f2d7 199.5px,#e9eac8 214.5px,#d57701 402.5px)"></i>
<i style="top:379px;left:92px;width:404px;background:linear-gradient(90deg,#0a76b5 0.5px,#c1dfd9 154.5px,#dceede 178.5px,#e8f4dd 192.5px,#eaf3da 196.5px,#eaeac9 214.5px,#d57601 403.5px)"></i>
<i style="top:380px;left:92px;width:405px;background:linear-gradient(90deg,#0a75b5 0.5px,#d1e8dc 168.5px,#e6f3de 188.5px,#e9f3de 192.5px,#ebefd2 206.5px,#d67601 404.5px)"></i>
<i style="top:381px;left:93px;width:405px;background:linear-gradient(90deg,#0b75b6 0.5px,#c9e3db 160.5px,#e2f1df 183.5px,#eaf3de 192.5px,#ebeed1 207.5px,#d67501 404.5px)"></i>
<i style="top:382px;left:93px;width:406px;background:linear-gradient(90deg,#0b75b6 0.5px,#d1e7dd 167.5px,#e0efe0 181.5px,#eaf3df 192.5px,#ecf3dc 197.5px,#ecedd0 209.5px,#d77501 405.5px)"></i>
<i style="top:383px;left:93px;width:407px;background:linear-gradient(90deg,#0b74b7 0.5px,#c5e0dc 157.5px,#deeee0 179.5px,#eaf3e0 192.5px,#edf2da 200.5px,#edeed4 207.5px,#d77401 406.5px)"></i>
<i style="top:384px;left:93px;width:408px;background:linear-gradient(90deg,#0b74b7 0.5px,#d4e8df 170.5px,#e9f3e1 190.5px,#ecf3e0 194.5px,#edeed4 208.5px,#d87401 407.5px)"></i>
<i style="top:385px;left:93px;width:409px;background:linear-gradient(90deg,#0a73b7 0.5px,#d0e5df 167.5px,#e4f0e1 184.5px,#ecf3e1 193.5px,#eef3de 198.5px,#eeedd3 210.5px,#d87401 408.5px)"></i>
<i style="top:386px;left:94px;width:409px;background:linear-gradient(90deg,#0b73b8 0.5px,#cee3df 164.5px,#e3efe2 182.5px,#edf3e1 193.5px,#eff2dd 200.5px,#eee9ce 215.5px,#d97301 408.5px)"></i>
<i style="top:387px;left:94px;width:410px;background:linear-gradient(90deg,#0b73b8 0.5px,#dcebe1 176.5px,#e5efe3 184.5px,#eef3e2 194.5px,#eff2de 200.5px,#eeebd1 213.5px,#d97301 409.5px)"></i>
<i style="top:388px;left:94px;width:411px;background:linear-gradient(90deg,#0b72b9 0.5px,#cfe3e0 165.5px,#e6f0e3 185.5px,#eff3e2 195.5px,#f0f2e0 199.5px,#efe8cd 218.5px,#da7201 410.5px)"></i>
<i style="top:389px;left:94px;width:412px;background:linear-gradient(90deg,#0b72b9 0.5px,#c5dcde 156.5px,#e5efe4 184.5px,#eef3e4 194.5px,#f0f2df 201.5px,#f0ead1 215.5px,#da7201 411.5px)"></i>
<i style="top:390px;left:94px;width:414px;background:linear-gradient(90deg,#0b71b9 0.5px,#d4e5e1 169.5px,#e9f0e5 188.5px,#f0f3e4 196.5px,#f1efda 207.5px,#db7100 413.5px)"></i>
<i style="top:391px;left:94px;width:415px;background:linear-gradient(90deg,#0b70ba 0.5px,#c6dcdf 157.5px,#e2ece4 181.5px,#f0f3e5 196.5px,#f2f2e2 200.5px,#f1e8d0 218.5px,#db7000 414.5px)"></i>
<i style="top:392px;left:95px;width:415px;background:linear-gradient(90deg,#0c70ba 0.5px,#cddfe1 162.5px,#f0f3e6 194.5px,#f2f2e1 201.5px,#f2ebd5 213.5px,#dc7000 414.5px)"></i>
<i style="top:393px;left:95px;width:416px;background:linear-gradient(90deg,#0c70bb 0.5px,#c3dadf 154.5px,#e6ede6 184.5px,#f2f3e6 196.5px,#f3f1e1 203.5px,#f2e9d2 217.5px,#dc6f00 415.5px)"></i>
<i style="top:394px;left:95px;width:417px;background:linear-gradient(90deg,#0c6fbb 0.5px,#cedfe2 163.5px,#e7eee6 185.5px,#f2f3e7 196.5px,#f4f2e3 201.5px,#f3e9d4 216.5px,#dd6f00 416.5px)"></i>
<i style="top:395px;left:95px;width:418px;background:linear-gradient(90deg,#0c6fbb 0.5px,#d5e3e3 169.5px,#ecf0e7 189.5px,#f3f3e7 198.5px,#f4ecd9 212.5px,#de6f00 417.5px)"></i>
<i style="top:396px;left:95px;width:419px;background:linear-gradient(90deg,#0b6ebc 0.5px,#d3e1e4 168.5px,#f3f3e8 196.5px,#f5f2e6 201.5px,#f4ecdb 212.5px,#de6e00 418.5px)"></i>
<i style="top:397px;left:96px;width:419px;background:linear-gradient(90deg,#0c6ebc 0.5px,#ccdde3 161.5px,#f4f3e9 196.5px,#f5f2e7 200.5px,#f5ebda 213.5px,#df6e00 418.5px)"></i>
<i style="top:398px;left:96px;width:420px;background:linear-gradient(90deg,#0c6ebc 0.5px,#dde6e6 175.5px,#f2f2ea 194.5px,#f5f3e9 198.5px,#f6edde 210.5px,#df6d00 419.5px)"></i>
<i style="top:399px;left:96px;width:421px;background:linear-gradient(90deg,#0c6dbd 0.5px,#d8e2e6 171.5px,#f6f3ea 198.5px,#f6ead9 216.5px,#e06d00 420.5px)"></i>
<i style="top:400px;left:96px;width:422px;background:linear-gradient(90deg,#0c6cbd 0.5px,#c4d6e2 154.5px,#f6f3eb 198.5px,#f7ecdd 213.5px,#e06c00 421.5px)"></i>
<i style="top:401px;left:96px;width:423px;background:linear-gradient(90deg,#0c6cbd 0.5px,#e5e9e9 182.5px,#f7f3eb 200.5px,#f8eee2 209.5px,#e16c00 422.5px)"></i>
<i style="top:402px;left:97px;width:423px;background:linear-gradient(90deg,#0d6cbe 0.5px,#dfe5e8 176.5px,#f8f3ec 199.5px,#f8ebdd 214.5px,#e16c01 422.5px)"></i>
<i style="top:403px;left:97px;width:424px;background:linear-gradient(90deg,#0d6bbe 0.5px,#d5dfe7 168.5px,#f5f1ec 195.5px,#f8f3ec 199.5px,#f9ede1 211.5px,#e26b01 423.5px)"></i>
<i style="top:404px;left:97px;width:425px;background:linear-gradient(90deg,#0d6bbf 0.5px,#e7e9ea 183.5px,#f9f2ed 199.5px,#faf1e9 205.5px,#e26b01 424.5px)"></i>
<i style="top:405px;left:97px;width:426px;background:linear-gradient(90deg,#0d6abf 0.5px,#dde3e9 175.5px,#faf2ee 200.5px,#faf0e8 207.5px,#e36a01 425.5px)"></i>
<i style="top:406px;left:97px;width:427px;background:linear-gradient(90deg,#0c6abf 0.5px,#eeeced 189.5px,#fbf2ee 201.5px,#f9e7d9 222.5px,#e36a01 426.5px)"></i>
<i style="top:407px;left:98px;width:427px;background:linear-gradient(90deg,#0e6ac0 0.5px,#f5efee 194.5px,#fbf2ef 201.5px,#e46901 426.5px)"></i>
<i style="top:408px;left:98px;width:428px;background:linear-gradient(90deg,#0d69c0 0.5px,#eae8ed 185.5px,#fcf2ef 201.5px,#fcede6 211.5px,#e46901 427.5px)"></i>
<i style="top:409px;left:98px;width:429px;background:linear-gradient(90deg,#0d69c1 0.5px,#eeebee 189.5px,#fdf2f0 202.5px,#e56901 428.5px)"></i>
<i style="top:410px;left:98px;width:430px;background:linear-gradient(90deg,#0d68c1 0.5px,#e8e7ed 184.5px,#fef2f0 203.5px,#e56801 429.5px)"></i>
<i style="top:411px;left:98px;width:431px;background:linear-gradient(90deg,#0d67c1 0.5px,#fef2f1 203.5px,#e66801 430.5px)"></i>
<i style="top:412px;left:98px;width:432px;background:linear-gradient(90deg,#0d67c1 0.5px,#fff2f2 203.5px,#e66701 431.5px)"></i>
<i style="top:413px;left:99px;width:432px;background:linear-gradient(90deg,#0e67c2 0.5px,#fff2f3 202.5px,#e76701 431.5px)"></i>
<i style="top:414px;left:99px;width:433px;background:linear-gradient(90deg,#0e66c2 0.5px,#fff2f3 203.5px,#e86601 432.5px)"></i>
<i style="top:415px;left:99px;width:434px;background:linear-gradient(90deg,#0e66c3 0.5px,#fef1f3 202.5px,#ffeff0 207.5px,#ffe6df 223.5px,#e86601 433.5px)"></i>
<i style="top:416px;left:99px;width:435px;background:linear-gradient(90deg,#0d65c3 0.5px,#fef0f3 202.5px,#ffe7e2 222.5px,#e96501 434.5px)"></i>
<i style="top:417px;left:100px;width:435px;background:linear-gradient(90deg,#0f65c4 0.5px,#fdeff3 201.5px,#ffe6e1 223.5px,#e96501 434.5px)"></i>
<i style="top:418px;left:100px;width:436px;background:linear-gradient(90deg,#0e65c4 0.5px,#e9e2f0 183.5px,#faedf3 198.5px,#fcedf3 201.5px,#ffe3db 229.5px,#ea6501 435.5px)"></i>
<i style="top:419px;left:100px;width:437px;background:linear-gradient(90deg,#0e64c4 0.5px,#fbecf3 199.5px,#ffe0d7 234.5px,#ea6401 436.5px)"></i>
<i style="top:420px;left:100px;width:439px;background:linear-gradient(90deg,#0e63c5 0.5px,#faebf3 198.5px,#fbe9ef 205.5px,#ffdace 244.5px,#eb6300 438.5px)"></i>
<i style="top:421px;left:100px;width:440px;background:linear-gradient(90deg,#0e63c5 0.5px,#f9eaf4 198.5px,#ffd9cd 246.5px,#eb6300 439.5px)"></i>
<i style="top:422px;left:101px;width:440px;background:linear-gradient(90deg,#0f63c5 0.5px,#dedbef 174.5px,#f9e9f4 197.5px,#ffd5c6 252.5px,#ec6200 439.5px)"></i>
<i style="top:423px;left:101px;width:441px;background:linear-gradient(90deg,#0f62c6 0.5px,#e1dbf0 176.5px,#f7e8f4 196.5px,#ffd2c2 257.5px,#ec6200 440.5px)"></i>
<i style="top:424px;left:101px;width:442px;background:linear-gradient(90deg,#0f62c6 0.5px,#d9d7ef 170.5px,#f7e7f4 196.5px,#ffcebc 264.5px,#ed6100 441.5px)"></i>
<i style="top:425px;left:101px;width:443px;background:linear-gradient(90deg,#0f61c6 0.5px,#f6e6f4 195.5px,#ffcbb7 269.5px,#ed6100 442.5px)"></i>
<i style="top:426px;left:101px;width:444px;background:linear-gradient(90deg,#0e60c7 0.5px,#d7d4ef 168.5px,#f4e5f4 194.5px,#ffc7b1 276.5px,#ee6000 443.5px)"></i>
<i style="top:427px;left:102px;width:444px;background:linear-gradient(90deg,#0f61c7 0.5px,#d8d4ef 168.5px,#f4e4f4 193.5px,#ffc4af 278.5px,#ee6000 443.5px)"></i>
<i style="top:428px;left:102px;width:445px;background:linear-gradient(90deg,#0f60c8 0.5px,#d9d4f0 169.5px,#f3e3f4 193.5px,#ffc0a8 286.5px,#ef6000 444.5px)"></i>
<i style="top:429px;left:102px;width:446px;background:linear-gradient(90deg,#0f5fc8 0.5px,#c9cbed 156.5px,#ecdef4 186.5px,#f3e1f3 193.5px,#ffbda2 292.5px,#ef5f00 445.5px)"></i>
<i style="top:430px;left:102px;width:447px;background:linear-gradient(90deg,#0f5fc8 0.5px,#cfcdef 161.5px,#f2e1f4 192.5px,#ffbaa0 295.5px,#f05f00 446.5px)"></i>
<i style="top:431px;left:102px;width:448px;background:linear-gradient(90deg,#0f5ec8 0.5px,#c4c7ed 152.5px,#e3d9f3 179.5px,#f1dff4 192.5px,#ffb698 304.5px,#f05e00 447.5px)"></i>
<i style="top:432px;left:103px;width:448px;background:linear-gradient(90deg,#105ec9 0.5px,#c1c5ed 149.5px,#eadcf4 184.5px,#f0def4 190.5px,#ffb292 310.5px,#f15e00 447.5px)"></i>
<i style="top:433px;left:103px;width:449px;background:linear-gradient(90deg,#105ec9 0.5px,#bfc3ec 147.5px,#e7daf4 182.5px,#efddf4 190.5px,#ffaf8d 315.5px,#f15d00 448.5px)"></i>
<i style="top:434px;left:103px;width:450px;background:linear-gradient(90deg,#105dca 0.5px,#bcc1ec 145.5px,#ded4f3 174.5px,#eedcf4 189.5px,#ffac8a 319.5px,#f25d00 449.5px)"></i>
<i style="top:435px;left:103px;width:451px;background:linear-gradient(90deg,#105cca 0.5px,#c7c6ef 154.5px,#ecdbf4 187.5px,#efd7ec 199.5px,#ffa883 327.5px,#f25d01 450.5px)"></i>
<i style="top:436px;left:104px;width:451px;background:linear-gradient(90deg,#115dcb 0.5px,#d0cbf1 161.5px,#e6d7f4 180.5px,#ecdaf3 188.5px,#ffa47c 333.5px,#f35c01 450.5px)"></i>
<i style="top:437px;left:104px;width:452px;background:linear-gradient(90deg,#105ccb 0.5px,#cec9f1 160.5px,#ebd9f4 186.5px,#ffa178 338.5px,#f35c01 451.5px)"></i>
<i style="top:438px;left:104px;width:453px;background:linear-gradient(90deg,#105bcb 0.5px,#c3c2ef 150.5px,#e1d3f4 176.5px,#ead8f4 186.5px,#ff9d72 345.5px,#f45b01 452.5px)"></i>
<i style="top:439px;left:104px;width:454px;background:linear-gradient(90deg,#105bcb 0.5px,#c6c3f0 153.5px,#e5d4f5 180.5px,#ead7f4 186.5px,#ff9a6e 350.5px,#f45b01 453.5px)"></i>
<i style="top:440px;left:104px;width:455px;background:linear-gradient(90deg,#105acc 0.5px,#c4c2f0 152.5px,#e3d3f5 179.5px,#e9d6f4 185.5px,#ff9667 357.5px,#f55a01 454.5px)"></i>
<i style="top:441px;left:105px;width:455px;background:linear-gradient(90deg,#115acc 0.5px,#b9bbee 141.5px,#dfd0f4 174.5px,#e7d4f5 183.5px,#ff9363 361.5px,#f55a01 454.5px)"></i>
<i style="top:442px;left:105px;width:456px;background:linear-gradient(90deg,#115acd 0.5px,#ccc5f2 158.5px,#dbcef4 171.5px,#e7d3f4 183.5px,#ff8f5d 368.5px,#f65901 455.5px)"></i>
<i style="top:443px;left:105px;width:457px;background:linear-gradient(90deg,#1159cd 0.5px,#ccc5f2 158.5px,#e6d2f5 182.5px,#ff8c58 373.5px,#f75901 456.5px)"></i>
<i style="top:444px;left:105px;width:458px;background:linear-gradient(90deg,#1158cd 0.5px,#c9c3f2 156.5px,#ddcdf5 173.5px,#e5d1f5 182.5px,#ff8a57 374.5px,#fe7f44 394.5px,#f75901 457.5px)"></i>
<i style="top:445px;left:106px;width:458px;background:linear-gradient(90deg,#1258ce 0.5px,#b7b7ee 139.5px,#d3c8f4 164.5px,#e3d0f5 179.5px,#ff854e 384.5px,#f85801 457.5px)"></i>
<i style="top:446px;left:106px;width:459px;background:linear-gradient(90deg,#1158ce 0.5px,#bbb9f0 143.5px,#d4c8f4 165.5px,#e3cff5 179.5px,#ff8149 390.5px,#f85801 458.5px)"></i>
<i style="top:447px;left:106px;width:460px;background:linear-gradient(90deg,#1157ce 0.5px,#bab8f0 142.5px,#d7c9f5 168.5px,#e3cef4 180.5px,#ff7e43 396.5px,#f95701 459.5px)"></i>
<i style="top:448px;left:106px;width:461px;background:linear-gradient(90deg,#1157cf 0.5px,#b2b3ef 136.5px,#cfc4f4 161.5px,#e2cdf5 179.5px,#ff7c41 398.5px,#fe7230 416.5px,#f95701 460.5px)"></i>
<i style="top:449px;left:106px;width:462px;background:linear-gradient(90deg,#1156cf 0.5px,#c4bcf2 151.5px,#e0ccf5 178.5px,#ff7739 408.5px,#fa5601 461.5px)"></i>
<i style="top:450px;left:107px;width:462px;background:linear-gradient(90deg,#1256d0 0.5px,#beb9f1 145.5px,#d3c5f5 164.5px,#e0cbf5 177.5px,#ff7436 410.5px,#fa5601 461.5px)"></i>
<i style="top:451px;left:107px;width:463px;background:linear-gradient(90deg,#1255d0 0.5px,#beb9f2 146.5px,#d6c6f5 167.5px,#dfc9f5 177.5px,#ff7131 416.5px,#fb5601 462.5px)"></i>
<i style="top:452px;left:107px;width:464px;background:linear-gradient(90deg,#1255d0 0.5px,#bcb7f1 144.5px,#d4c4f5 165.5px,#dec8f5 176.5px,#ff6c28 426.5px,#fb5501 463.5px)"></i>
<i style="top:453px;left:107px;width:466px;background:linear-gradient(90deg,#1154d0 0.5px,#bbb5f1 143.5px,#cfc1f5 161.5px,#ddc7f5 176.5px,#ff6a26 428.5px,#fc5400 465.5px)"></i>
<i style="top:454px;left:108px;width:466px;background:linear-gradient(90deg,#1354d1 0.5px,#b7b3f1 139.5px,#d4c3f5 165.5px,#dcc6f5 174.5px,#ff6621 433.5px,#fc5400 465.5px)"></i>
<i style="top:455px;left:108px;width:467px;background:linear-gradient(90deg,#1254d1 0.5px,#afadf0 132.5px,#d2c1f5 163.5px,#dbc5f5 174.5px,#fe631c 439.5px,#fd5300 466.5px)"></i>
<i style="top:456px;left:108px;width:468px;background:linear-gradient(90deg,#1253d2 0.5px,#a6a8ef 125.5px,#cabcf5 156.5px,#dac4f5 172.5px,#ff5f15 446.5px,#fd5300 467.5px)"></i>
<i style="top:457px;left:108px;width:469px;background:linear-gradient(90deg,#1252d2 0.5px,#b2aef1 135.5px,#d1bff6 163.5px,#d8c3f5 171.5px,#dac1f2 177.5px,#fe5c11 451.5px,#fe5200 468.5px)"></i>
<i style="top:458px;left:109px;width:469px;background:linear-gradient(90deg,#1352d2 0.5px,#9ea2ee 117.5px,#c7b9f5 153.5px,#d9c2f5 171.5px,#ff580b 457.5px,#fe5200 468.5px)"></i>
<i style="top:459px;left:109px;width:470px;background:linear-gradient(90deg,#1352d3 0.5px,#aeabf1 131.5px,#cdbcf6 159.5px,#d8c1f5 171.5px,#ff5100 469.5px)"></i>
<i style="top:460px;left:109px;width:469px;background:linear-gradient(90deg,#1351d3 0.5px,#9b9fee 115.5px,#ccbbf6 158.5px,#d7c0f5 170.5px,#fe5101 468.5px)"></i>
<i style="top:461px;left:109px;width:467px;background:linear-gradient(90deg,#1351d3 0.5px,#aaa7f1 128.5px,#c7b8f5 154.5px,#d6bff6 169.5px,#fd5102 466.5px)"></i>
<i style="top:462px;left:109px;width:465px;background:linear-gradient(90deg,#1250d4 0.5px,#b4acf3 137.5px,#c9b8f6 156.5px,#d5bef5 169.5px,#fc5004 464.5px)"></i>
<i style="top:463px;left:110px;width:461px;background:linear-gradient(90deg,#1350d4 0.5px,#a7a5f1 125.5px,#c8b7f6 154.5px,#d4bcf6 167.5px,#fb5006 460.5px)"></i>
<i style="top:464px;left:110px;width:459px;background:linear-gradient(90deg,#134fd4 0.5px,#a4a3f0 123.5px,#bfb1f5 146.5px,#d3bbf6 167.5px,#fa4f07 458.5px)"></i>
<i style="top:465px;left:110px;width:457px;background:linear-gradient(90deg,#134fd5 0.5px,#b0a8f3 133.5px,#c8b6f6 155.5px,#d3baf5 167.5px,#f94f08 456.5px)"></i>
<i style="top:466px;left:110px;width:455px;background:linear-gradient(90deg,#134ed5 0.5px,#9f9ff0 119.5px,#c3b3f6 151.5px,#d2b9f6 166.5px,#f84e0a 454.5px)"></i>
<i style="top:467px;left:111px;width:451px;background:linear-gradient(90deg,#144ed6 0.5px,#7988e9 85.5px,#b2a9f4 135.5px,#bdaef5 144.5px,#d1b8f5 165.5px,#f64e0c 450.5px)"></i>
<i style="top:468px;left:111px;width:449px;background:linear-gradient(90deg,#144ed6 0.5px,#aea6f3 131.5px,#c4b2f6 151.5px,#d0b7f6 164.5px,#f54e0d 448.5px)"></i>
<i style="top:469px;left:111px;width:447px;background:linear-gradient(90deg,#144dd6 0.5px,#9b9bf0 115.5px,#bdadf6 145.5px,#cfb6f6 163.5px,#f44d0e 446.5px)"></i>
<i style="top:470px;left:111px;width:445px;background:linear-gradient(90deg,#134cd6 0.5px,#9999f0 113.5px,#bcacf6 144.5px,#cdb5f6 162.5px,#f34c10 444.5px)"></i>
<i style="top:471px;left:112px;width:442px;background:linear-gradient(90deg,#144cd7 0.5px,#a09cf2 119.5px,#beacf6 145.5px,#cdb4f6 161.5px,#f24c11 441.5px)"></i>
<i style="top:472px;left:112px;width:439px;background:linear-gradient(90deg,#144cd7 0.5px,#a49ef2 122.5px,#b9a9f6 141.5px,#ccb3f6 161.5px,#f14c13 438.5px)"></i>
<i style="top:473px;left:112px;width:437px;background:linear-gradient(90deg,#144bd7 0.5px,#6c7de9 74.5px,#aea3f4 131.5px,#c1adf7 149.5px,#c8b0f6 156.5px,#cbb1f6 161.5px,#f04b14 436.5px)"></i>
<i style="top:474px;left:112px;width:435px;background:linear-gradient(90deg,#144bd8 0.5px,#a89ff3 126.5px,#bfabf7 147.5px,#cab0f6 160.5px,#ef4b15 434.5px)"></i>
<i style="top:475px;left:113px;width:432px;background:linear-gradient(90deg,#154bd8 0.5px,#9f9af2 118.5px,#bdaaf7 145.5px,#caaff6 159.5px,#ee4a17 431.5px)"></i>
<i style="top:476px;left:113px;width:430px;background:linear-gradient(90deg,#154ad9 0.5px,#a99ff4 127.5px,#bca8f7 144.5px,#c9aef6 158.5px,#ed4a18 429.5px)"></i>
<i style="top:477px;left:113px;width:427px;background:linear-gradient(90deg,#1549d9 0.5px,#a39bf4 122.5px,#b9a7f7 142.5px,#c7adf6 156.5px,#c9a9ee 168.5px,#eb491a 426.5px)"></i>
<i style="top:478px;left:113px;width:425px;background:linear-gradient(90deg,#1449d9 0.5px,#a299f4 121.5px,#b5a4f6 138.5px,#c7acf6 157.5px,#ea491b 424.5px)"></i>
<i style="top:479px;left:114px;width:422px;background:linear-gradient(90deg,#1549da 0.5px,#a198f4 119.5px,#b7a4f7 139.5px,#c6abf6 155.5px,#e9481d 421.5px)"></i>
<i style="top:480px;left:114px;width:420px;background:linear-gradient(90deg,#1548da 0.5px,#9a93f3 113.5px,#b3a2f6 136.5px,#c4aaf7 154.5px,#c7a6ee 165.5px,#e8481e 419.5px)"></i>
<i style="top:481px;left:114px;width:418px;background:linear-gradient(90deg,#1547da 0.5px,#8387ef 94.5px,#a398f5 122.5px,#af9ef6 132.5px,#c4a9f6 154.5px,#e7471f 417.5px)"></i>
<i style="top:482px;left:115px;width:414px;background:linear-gradient(90deg,#1648db 0.5px,#9e95f4 116.5px,#b6a2f7 138.5px,#c3a7f7 152.5px,#c4a6f2 159.5px,#e64721 413.5px)"></i>
<i style="top:483px;left:115px;width:412px;background:linear-gradient(90deg,#1647db 0.5px,#a095f4 118.5px,#b09ef7 133.5px,#c2a7f7 152.5px,#e54723 411.5px)"></i>
<i style="top:484px;left:115px;width:410px;background:linear-gradient(90deg,#1646db 0.5px,#9f94f5 118.5px,#ad9cf6 130.5px,#c2a6f6 152.5px,#e44624 409.5px)"></i>
<i style="top:485px;left:115px;width:408px;background:linear-gradient(90deg,#1646dc 0.5px,#a296f5 121.5px,#b29ef7 135.5px,#c0a4f7 151.5px,#e34625 407.5px)"></i>
<i style="top:486px;left:116px;width:404px;background:linear-gradient(90deg,#1746dc 0.5px,#a094f5 118.5px,#b7a0f7 140.5px,#c0a3f7 150.5px,#e14527 403.5px)"></i>
<i style="top:487px;left:116px;width:402px;background:linear-gradient(90deg,#1645dc 0.5px,#7078ed 76.5px,#9d92f5 116.5px,#ab99f7 128.5px,#bfa2f7 149.5px,#e04529 401.5px)"></i>
<i style="top:488px;left:116px;width:400px;background:linear-gradient(90deg,#1644dd 0.5px,#9089f3 104.5px,#a897f7 126.5px,#bca1f7 147.5px,#c09dee 160.5px,#df442a 399.5px)"></i>
<i style="top:489px;left:116px;width:398px;background:linear-gradient(90deg,#1644dd 0.5px,#9c90f5 115.5px,#b29bf8 136.5px,#bda0f7 148.5px,#de442b 397.5px)"></i>
<i style="top:490px;left:117px;width:395px;background:linear-gradient(90deg,#1744dd 0.5px,#7278ef 78.5px,#9d8ff5 115.5px,#b099f8 133.5px,#bc9ff7 147.5px,#dd432c 394.5px)"></i>
<i style="top:491px;left:117px;width:392px;background:linear-gradient(90deg,#1743de 0.5px,#968bf5 109.5px,#ad98f8 131.5px,#ba9ef7 145.5px,#bd9bf0 155.5px,#dc432e 391.5px)"></i>
<i style="top:492px;left:117px;width:390px;background:linear-gradient(90deg,#1742de 0.5px,#9389f5 107.5px,#ab96f8 129.5px,#ba9df7 145.5px,#db4330 389.5px)"></i>
<i style="top:493px;left:118px;width:387px;background:linear-gradient(90deg,#1843de 0.5px,#9288f5 105.5px,#a893f7 125.5px,#ba9cf7 145.5px,#da4231 386.5px)"></i>
<i style="top:494px;left:118px;width:385px;background:linear-gradient(90deg,#1742df 0.5px,#978af6 110.5px,#a793f8 125.5px,#b99bf7 144.5px,#d84132 384.5px)"></i>
<i style="top:495px;left:118px;width:383px;background:linear-gradient(90deg,#1741df 0.5px,#9086f5 104.5px,#a691f8 124.5px,#b899f7 143.5px,#d74134 382.5px)"></i>
<i style="top:496px;left:118px;width:380px;background:linear-gradient(90deg,#1741df 0.5px,#9689f6 110.5px,#a993f8 128.5px,#b798f7 143.5px,#d64136 379.5px)"></i>
<i style="top:497px;left:119px;width:377px;background:linear-gradient(90deg,#1841e0 0.5px,#8e84f5 102.5px,#a28ef8 120.5px,#b697f7 141.5px,#d54037 376.5px)"></i>
<i style="top:498px;left:119px;width:375px;background:linear-gradient(90deg,#1840e0 0.5px,#8c82f5 100.5px,#a18df8 119.5px,#b596f7 141.5px,#d44038 374.5px)"></i>
<i style="top:499px;left:119px;width:373px;background:linear-gradient(90deg,#183fe0 0.5px,#8f83f6 103.5px,#9f8bf8 118.5px,#b395f7 139.5px,#b594f4 145.5px,#d33f3a 372.5px)"></i>
<i style="top:500px;left:120px;width:370px;background:linear-gradient(90deg,#193fe1 0.5px,#9083f6 103.5px,#b294f8 137.5px,#b494f6 140.5px,#d23f3b 369.5px)"></i>
<i style="top:501px;left:120px;width:367px;background:linear-gradient(90deg,#183fe1 0.5px,#8c80f6 100.5px,#9f8af8 117.5px,#b393f7 139.5px,#d13e3d 366.5px)"></i>
<i style="top:502px;left:120px;width:365px;background:linear-gradient(90deg,#183ee1 0.5px,#8a7ef5 98.5px,#9a87f8 113.5px,#b192f8 137.5px,#d03e3e 364.5px)"></i>
<i style="top:503px;left:120px;width:363px;background:linear-gradient(90deg,#183de2 0.5px,#8c7ff6 100.5px,#a98df8 128.5px,#b091f8 137.5px,#ce3d3f 362.5px)"></i>
<i style="top:504px;left:121px;width:360px;background:linear-gradient(90deg,#193de2 0.5px,#857af5 93.5px,#9e87f8 116.5px,#af90f8 135.5px,#cd3d41 359.5px)"></i>
<i style="top:505px;left:121px;width:357px;background:linear-gradient(90deg,#193de2 0.5px,#8d7ef7 101.5px,#af8ff8 135.5px,#cc3d43 356.5px)"></i>
<i style="top:506px;left:121px;width:355px;background:linear-gradient(90deg,#193ce3 0.5px,#8a7cf6 98.5px,#a188f9 120.5px,#ae8ef8 135.5px,#cb3c44 354.5px)"></i>
<i style="top:507px;left:122px;width:352px;background:linear-gradient(90deg,#1a3ce3 0.5px,#8579f6 93.5px,#9d86f9 116.5px,#ad8cf8 133.5px,#ca3c45 351.5px)"></i>
<i style="top:508px;left:122px;width:350px;background:linear-gradient(90deg,#193be3 0.5px,#8277f6 91.5px,#9f86f9 118.5px,#ac8bf8 133.5px,#c93b47 349.5px)"></i>
<i style="top:509px;left:122px;width:348px;background:linear-gradient(90deg,#193be4 0.5px,#5d61f0 58.5px,#8f7df8 103.5px,#a387f9 123.5px,#ac8af7 133.5px,#c83b48 347.5px)"></i>
<i style="top:510px;left:123px;width:344px;background:linear-gradient(90deg,#1a3be4 0.5px,#8a79f7 97.5px,#9b83f9 114.5px,#aa89f8 131.5px,#c73a4a 343.5px)"></i>
<i style="top:511px;left:123px;width:342px;background:linear-gradient(90deg,#1a3ae4 0.5px,#8375f6 91.5px,#967ff9 109.5px,#a988f8 130.5px,#c53a4b 341.5px)"></i>
<i style="top:512px;left:123px;width:340px;background:linear-gradient(90deg,#1a39e5 0.5px,#595ef0 55.5px,#8575f7 93.5px,#947df9 107.5px,#a887f8 129.5px,#c4394d 339.5px)"></i>
<i style="top:513px;left:123px;width:338px;background:linear-gradient(90deg,#1939e5 0.5px,#8173f7 90.5px,#9980f9 113.5px,#a886f8 129.5px,#c3394e 337.5px)"></i>
<i style="top:514px;left:124px;width:335px;background:linear-gradient(90deg,#1a39e5 0.5px,#8072f7 88.5px,#9d80f9 116.5px,#a785f8 128.5px,#c2384f 334.5px)"></i>
<i style="top:515px;left:124px;width:332px;background:linear-gradient(90deg,#1a38e5 0.5px,#8373f7 91.5px,#8e79f9 102.5px,#a684f8 128.5px,#c13851 331.5px)"></i>
<i style="top:516px;left:124px;width:330px;background:linear-gradient(90deg,#1a37e6 0.5px,#8674f8 94.5px,#a583f8 127.5px,#c03853 329.5px)"></i>
<i style="top:517px;left:125px;width:327px;background:linear-gradient(90deg,#1b37e6 0.5px,#7b6ef7 84.5px,#987cf9 111.5px,#a481f8 126.5px,#bf3754 326.5px)"></i>
<i style="top:518px;left:125px;width:325px;background:linear-gradient(90deg,#1b37e6 0.5px,#7e6ff7 87.5px,#987cf9 112.5px,#a380f8 125.5px,#be3755 324.5px)"></i>
<i style="top:519px;left:125px;width:322px;background:linear-gradient(90deg,#1a36e7 0.5px,#474fef 38.5px,#8170f8 90.5px,#957af9 109.5px,#a37ff8 125.5px,#bd3657 321.5px)"></i>
<i style="top:520px;left:126px;width:319px;background:linear-gradient(90deg,#1b36e7 0.5px,#7e6df8 86.5px,#9479f9 108.5px,#a27ef8 123.5px,#bb3658 318.5px)"></i>
<i style="top:521px;left:126px;width:317px;background:linear-gradient(90deg,#1b35e7 0.5px,#7a6bf7 83.5px,#8f76f9 103.5px,#a07df9 121.5px,#ba355a 316.5px)"></i>
<i style="top:522px;left:126px;width:315px;background:linear-gradient(90deg,#1b35e8 0.5px,#836ef9 91.5px,#9176f9 105.5px,#a07cf8 122.5px,#b9355b 314.5px)"></i>
<i style="top:523px;left:127px;width:312px;background:linear-gradient(90deg,#1c35e8 0.5px,#7b6af8 83.5px,#9f7bf9 120.5px,#b8345c 311.5px)"></i>
<i style="top:524px;left:127px;width:309px;background:linear-gradient(90deg,#1c34e8 0.5px,#7d6af8 85.5px,#8c72fa 100.5px,#9d7af9 119.5px,#b7345e 308.5px)"></i>
<i style="top:525px;left:127px;width:307px;background:linear-gradient(90deg,#1c33e9 0.5px,#7465f7 77.5px,#8a70fa 98.5px,#9d79f9 119.5px,#b63460 306.5px)"></i>
<i style="top:526px;left:128px;width:304px;background:linear-gradient(90deg,#1c33e9 0.5px,#7766f8 79.5px,#876efa 95.5px,#9c78f9 117.5px,#b53361 303.5px)"></i>
<i style="top:527px;left:128px;width:302px;background:linear-gradient(90deg,#1c33e9 0.5px,#7b67f9 83.5px,#9b77f9 117.5px,#b43262 301.5px)"></i>
<i style="top:528px;left:128px;width:300px;background:linear-gradient(90deg,#1c32e9 0.5px,#7966f9 82.5px,#8c6ffa 100.5px,#9b76f9 117.5px,#b33263 299.5px)"></i>
<i style="top:529px;left:129px;width:296px;background:linear-gradient(90deg,#1d32ea 0.5px,#7262f8 75.5px,#826afa 90.5px,#9974f9 114.5px,#b13266 295.5px)"></i>
<i style="top:530px;left:129px;width:294px;background:linear-gradient(90deg,#1d31ea 0.5px,#7563f8 78.5px,#8068fa 88.5px,#9973f9 115.5px,#b03167 293.5px)"></i>
<i style="top:531px;left:130px;width:291px;background:linear-gradient(90deg,#1e31eb 0.5px,#7361f8 75.5px,#7e67fa 86.5px,#9872f9 113.5px,#af3168 290.5px)"></i>
<i style="top:532px;left:130px;width:289px;background:linear-gradient(90deg,#1d31eb 0.5px,#7360f9 75.5px,#8a6cfa 98.5px,#9771f9 113.5px,#ae3069 288.5px)"></i>
<i style="top:533px;left:130px;width:287px;background:linear-gradient(90deg,#1d30eb 0.5px,#715ff9 74.5px,#896afa 97.5px,#9670f9 112.5px,#ad306b 286.5px)"></i>
<i style="top:534px;left:131px;width:283px;background:linear-gradient(90deg,#1e30eb 0.5px,#705df9 72.5px,#8669fa 94.5px,#956ff9 110.5px,#ac2f6d 282.5px)"></i>
<i style="top:535px;left:131px;width:281px;background:linear-gradient(90deg,#1e2fec 0.5px,#715df9 73.5px,#936ef9 109.5px,#946ef9 111.5px,#ab2f6e 280.5px)"></i>
<i style="top:536px;left:131px;width:279px;background:linear-gradient(90deg,#1e2eec 0.5px,#765ffa 78.5px,#936df9 109.5px,#aa2e6f 278.5px)"></i>
<i style="top:537px;left:132px;width:276px;background:linear-gradient(90deg,#1f2eec 0.5px,#745efa 76.5px,#926cf9 108.5px,#a92e71 275.5px)"></i>
<i style="top:538px;left:132px;width:273px;background:linear-gradient(90deg,#1e2eed 0.5px,#735cfa 75.5px,#926bf9 108.5px,#a72e73 272.5px)"></i>
<i style="top:539px;left:132px;width:271px;background:linear-gradient(90deg,#1e2ded 0.5px,#6856f9 65.5px,#8063fa 89.5px,#9069f9 106.5px,#9266f1 118.5px,#a62d74 270.5px)"></i>
<i style="top:540px;left:133px;width:268px;background:linear-gradient(90deg,#1f2ded 0.5px,#6e59f9 70.5px,#8263fa 90.5px,#9068f9 106.5px,#a52d75 267.5px)"></i>
<i style="top:541px;left:133px;width:266px;background:linear-gradient(90deg,#1f2ced 0.5px,#6956f9 66.5px,#8161fb 89.5px,#8e67fa 104.5px,#a42c77 265.5px)"></i>
<i style="top:542px;left:133px;width:264px;background:linear-gradient(90deg,#1e2cee 0.5px,#6452f9 61.5px,#7e60fb 87.5px,#8d66fa 103.5px,#a32c78 263.5px)"></i>
<i style="top:543px;left:134px;width:260px;background:linear-gradient(90deg,#1f2bee 0.5px,#6a55f9 66.5px,#765bfb 78.5px,#8d65fa 103.5px,#a22b7a 259.5px)"></i>
<i style="top:544px;left:134px;width:258px;background:linear-gradient(90deg,#1f2bee 0.5px,#6853fa 65.5px,#795cfb 81.5px,#8c64fa 102.5px,#a12b7b 257.5px)"></i>
<i style="top:545px;left:135px;width:255px;background:linear-gradient(90deg,#202bef 0.5px,#624ff9 58.5px,#7a5cfb 82.5px,#8b63fa 101.5px,#a02a7c 254.5px)"></i>
<i style="top:546px;left:135px;width:253px;background:linear-gradient(90deg,#202aef 0.5px,#7056fb 72.5px,#8b62f9 101.5px,#9f2a7e 252.5px)"></i>
<i style="top:547px;left:135px;width:251px;background:linear-gradient(90deg,#2029ef 0.5px,#5446f8 46.5px,#6c53fa 68.5px,#8961fa 100.5px,#9d297f 250.5px)"></i>
<i style="top:548px;left:136px;width:247px;background:linear-gradient(90deg,#2029ef 0.5px,#604cf9 56.5px,#7859fb 80.5px,#8960fa 99.5px,#9c2981 246.5px)"></i>
<i style="top:549px;left:136px;width:245px;background:linear-gradient(90deg,#2029f0 0.5px,#644efa 60.5px,#885ffa 98.5px,#9b2982 244.5px)"></i>
<i style="top:550px;left:136px;width:243px;background:linear-gradient(90deg,#2028f0 0.5px,#4f42f7 41.5px,#6850fa 65.5px,#7355fb 75.5px,#875dfa 98.5px,#9a2884 242.5px)"></i>
<i style="top:551px;left:137px;width:240px;background:linear-gradient(90deg,#2128f0 0.5px,#624cfa 58.5px,#7656fb 78.5px,#865cfa 96.5px,#992885 239.5px)"></i>
<i style="top:552px;left:137px;width:238px;background:linear-gradient(90deg,#2127f1 0.5px,#6b50fb 67.5px,#855bfa 96.5px,#982786 237.5px)"></i>
<i style="top:553px;left:138px;width:234px;background:linear-gradient(90deg,#2227f1 0.5px,#644cfb 60.5px,#845afa 94.5px,#972788 233.5px)"></i>
<i style="top:554px;left:138px;width:232px;background:linear-gradient(90deg,#2126f1 0.5px,#624afb 58.5px,#8259fa 92.5px,#8556f3 103.5px,#96268a 231.5px)"></i>
<i style="top:555px;left:138px;width:230px;background:linear-gradient(90deg,#2126f1 0.5px,#654bfb 61.5px,#8358fa 94.5px,#95268b 229.5px)"></i>
<i style="top:556px;left:139px;width:227px;background:linear-gradient(90deg,#2226f2 0.5px,#5f47fb 55.5px,#6e4ffb 70.5px,#8257fa 92.5px,#93258c 226.5px)"></i>
<i style="top:557px;left:139px;width:224px;background:linear-gradient(90deg,#2225f2 0.5px,#5d45fb 53.5px,#8156fa 91.5px,#92258e 223.5px)"></i>
<i style="top:558px;left:140px;width:221px;background:linear-gradient(90deg,#2325f2 0.5px,#5b44fb 51.5px,#6c4cfc 67.5px,#8055fa 90.5px,#912590 220.5px)"></i>
<i style="top:559px;left:140px;width:219px;background:linear-gradient(90deg,#2224f3 0.5px,#4839f8 33.5px,#6649fc 62.5px,#7f54fa 89.5px,#902491 218.5px)"></i>
<i style="top:560px;left:140px;width:217px;background:linear-gradient(90deg,#2223f3 0.5px,#5941fb 49.5px,#704dfc 73.5px,#7e53fa 89.5px,#8f2392 216.5px)"></i>
<i style="top:561px;left:141px;width:214px;background:linear-gradient(90deg,#2323f3 0.5px,#5c43fb 52.5px,#6647fc 61.5px,#7c51fb 86.5px,#7e50f6 93.5px,#8e2393 213.5px)"></i>
<i style="top:562px;left:141px;width:211px;background:linear-gradient(90deg,#2323f3 0.5px,#5840fb 48.5px,#7c50fb 86.5px,#8d2395 210.5px)"></i>
<i style="top:563px;left:142px;width:208px;background:linear-gradient(90deg,#2423f4 0.5px,#6144fc 56.5px,#7c4ffa 86.5px,#8c2297 207.5px)"></i>
<i style="top:564px;left:142px;width:206px;background:linear-gradient(90deg,#2322f4 0.5px,#5c41fc 52.5px,#7b4efa 85.5px,#8a2298 205.5px)"></i>
<i style="top:565px;left:142px;width:204px;background:linear-gradient(90deg,#2321f4 0.5px,#513afb 41.5px,#6a46fc 66.5px,#794dfb 84.5px,#892199 203.5px)"></i>
<i style="top:566px;left:143px;width:201px;background:linear-gradient(90deg,#2421f5 0.5px,#593dfc 48.5px,#6745fc 63.5px,#794cfa 83.5px,#88219b 200.5px)"></i>
<i style="top:567px;left:143px;width:198px;background:linear-gradient(90deg,#2420f5 0.5px,#543bfb 44.5px,#774bfb 81.5px,#87209d 197.5px)"></i>
<i style="top:568px;left:144px;width:195px;background:linear-gradient(90deg,#2520f5 0.5px,#553afc 44.5px,#764afb 80.5px,#86209e 194.5px)"></i>
<i style="top:569px;left:144px;width:193px;background:linear-gradient(90deg,#241ff5 0.5px,#573bfc 46.5px,#7649fb 80.5px,#851f9f 192.5px)"></i>
<i style="top:570px;left:144px;width:191px;background:linear-gradient(90deg,#241ff6 0.5px,#5238fc 42.5px,#7548fb 79.5px,#841fa1 190.5px)"></i>
<i style="top:571px;left:145px;width:188px;background:linear-gradient(90deg,#251ff6 0.5px,#4e35fb 37.5px,#7447fb 78.5px,#831ea2 187.5px)"></i>
<i style="top:572px;left:145px;width:185px;background:linear-gradient(90deg,#251ef6 0.5px,#5237fc 42.5px,#6740fc 63.5px,#7345fb 78.5px,#821ea4 184.5px)"></i>
<i style="top:573px;left:146px;width:182px;background:linear-gradient(90deg,#251ef6 0.5px,#4d33fc 36.5px,#5e3cfc 53.5px,#7244fb 75.5px,#801ea5 181.5px)"></i>
<i style="top:574px;left:146px;width:180px;background:linear-gradient(90deg,#251df7 0.5px,#4d32fc 36.5px,#5f3cfc 55.5px,#7243fb 76.5px,#7f1da6 179.5px)"></i>
<i style="top:575px;left:147px;width:177px;background:linear-gradient(90deg,#261df7 0.5px,#5737fd 46.5px,#7142fb 74.5px,#7e1da8 176.5px)"></i>
<i style="top:576px;left:147px;width:174px;background:linear-gradient(90deg,#261cf7 0.5px,#5535fd 44.5px,#6e41fb 72.5px,#713ff7 79.5px,#7d1caa 173.5px)"></i>
<i style="top:577px;left:148px;width:171px;background:linear-gradient(90deg,#271cf8 0.5px,#5836fd 46.5px,#6f40fb 73.5px,#7c1cab 170.5px)"></i>
<i style="top:578px;left:148px;width:169px;background:linear-gradient(90deg,#261bf8 0.5px,#5032fd 39.5px,#6e3ffb 71.5px,#7b1bac 168.5px)"></i>
<i style="top:579px;left:148px;width:167px;background:linear-gradient(90deg,#261bf8 0.5px,#432bfc 27.5px,#5a35fd 49.5px,#6d3efb 72.5px,#7a1bae 166.5px)"></i>
<i style="top:580px;left:149px;width:164px;background:linear-gradient(90deg,#271bf8 0.5px,#5131fd 39.5px,#6b3cfc 68.5px,#6d3bf6 76.5px,#791aaf 163.5px)"></i>
<i style="top:581px;left:149px;width:161px;background:linear-gradient(90deg,#271af8 0.5px,#5432fd 43.5px,#6a3bfc 68.5px,#6d39f5 77.5px,#771ab1 160.5px)"></i>
<i style="top:582px;left:150px;width:158px;background:linear-gradient(90deg,#271af9 0.5px,#492bfd 31.5px,#6b3bfb 68.5px,#761ab2 157.5px)"></i>
<i style="top:583px;left:150px;width:156px;background:linear-gradient(90deg,#2719f9 0.5px,#4e2efd 37.5px,#6939fc 66.5px,#7519b4 155.5px)"></i>
<i style="top:584px;left:151px;width:153px;background:linear-gradient(90deg,#2819f9 0.5px,#522ffd 40.5px,#6838fc 65.5px,#7418b5 152.5px)"></i>
<i style="top:585px;left:151px;width:151px;background:linear-gradient(90deg,#2818f9 0.5px,#4427fd 26.5px,#532ffd 42.5px,#6837fc 65.5px,#7318b6 150.5px)"></i>
<i style="top:586px;left:152px;width:147px;background:linear-gradient(90deg,#2918fa 0.5px,#4c2bfd 34.5px,#6636fc 63.5px,#7218b8 146.5px)"></i>
<i style="top:587px;left:152px;width:145px;background:linear-gradient(90deg,#2817fa 0.5px,#502cfd 38.5px,#6635fc 63.5px,#7117ba 144.5px)"></i>
<i style="top:588px;left:153px;width:142px;background:linear-gradient(90deg,#2917fa 0.5px,#4b28fd 32.5px,#6534fc 61.5px,#7017bb 141.5px)"></i>
<i style="top:589px;left:153px;width:140px;background:linear-gradient(90deg,#2916fa 0.5px,#4a28fd 32.5px,#6433fc 61.5px,#6f16bc 139.5px)"></i>
<i style="top:590px;left:154px;width:137px;background:linear-gradient(90deg,#2a16fb 0.5px,#4e28fd 35.5px,#6332fc 60.5px,#6e16bd 136.5px)"></i>
<i style="top:591px;left:154px;width:134px;background:linear-gradient(90deg,#2915fb 0.5px,#4d28fd 35.5px,#6231fc 58.5px,#6c15bf 133.5px)"></i>
<i style="top:592px;left:155px;width:131px;background:linear-gradient(90deg,#2a15fb 0.5px,#4624fe 27.5px,#6130fc 57.5px,#6b15c1 130.5px)"></i>
<i style="top:593px;left:155px;width:129px;background:linear-gradient(90deg,#2a14fb 0.5px,#4422fe 25.5px,#612ffc 57.5px,#6a14c2 128.5px)"></i>
<i style="top:594px;left:156px;width:126px;background:linear-gradient(90deg,#2a14fc 0.5px,#4221fe 23.5px,#5f2dfc 54.5px,#612cf9 60.5px,#6914c3 125.5px)"></i>
<i style="top:595px;left:156px;width:123px;background:linear-gradient(90deg,#2a13fc 0.5px,#4622fe 27.5px,#5f2cfc 55.5px,#6814c5 122.5px)"></i>
<i style="top:596px;left:157px;width:120px;background:linear-gradient(90deg,#2b13fc 0.5px,#4722fe 28.5px,#5e2bfc 53.5px,#6713c7 119.5px)"></i>
<i style="top:597px;left:158px;width:117px;background:linear-gradient(90deg,#2c13fc 0.5px,#4922fe 29.5px,#5d2afc 53.5px,#6613c8 116.5px)"></i>
<i style="top:598px;left:158px;width:115px;background:linear-gradient(90deg,#2b12fc 0.5px,#461ffe 26.5px,#5c29fc 52.5px,#6512c9 114.5px)"></i>
<i style="top:599px;left:159px;width:112px;background:linear-gradient(90deg,#2c12fd 0.5px,#451ffe 25.5px,#5c28fc 51.5px,#6412ca 111.5px)"></i>
<i style="top:600px;left:159px;width:109px;background:linear-gradient(90deg,#2c11fd 0.5px,#3e1bfe 18.5px,#5927fd 48.5px,#5b27fc 50.5px,#6211cd 108.5px)"></i>
<i style="top:601px;left:160px;width:106px;background:linear-gradient(90deg,#2c11fd 0.5px,#421bfe 21.5px,#5926fd 47.5px,#6111ce 105.5px)"></i>
<i style="top:602px;left:160px;width:104px;background:linear-gradient(90deg,#2c10fd 0.5px,#481efe 28.5px,#5825fc 47.5px,#6010cf 103.5px)"></i>
<i style="top:603px;left:161px;width:101px;background:linear-gradient(90deg,#2d10fd 0.5px,#431bfe 22.5px,#5723fd 45.5px,#5824fc 47.5px,#5f10d0 100.5px)"></i>
<i style="top:604px;left:162px;width:98px;background:linear-gradient(90deg,#2e10fe 0.5px,#5723fc 45.5px,#5e0fd2 97.5px)"></i>
<i style="top:605px;left:162px;width:95px;background:linear-gradient(90deg,#2d0ffe 0.5px,#3f18fe 18.5px,#5621fc 44.5px,#5d0fd4 94.5px)"></i>
<i style="top:606px;left:163px;width:92px;background:linear-gradient(90deg,#2e0ffe 0.5px,#5520fd 42.5px,#5c0fd5 91.5px)"></i>
<i style="top:607px;left:164px;width:89px;background:linear-gradient(90deg,#2f0efe 0.5px,#3b15fe 13.5px,#541ffd 41.5px,#5b0ed6 88.5px)"></i>
<i style="top:608px;left:164px;width:87px;background:linear-gradient(90deg,#2e0efe 0.5px,#531efd 40.5px,#5a0ed8 86.5px)"></i>
<i style="top:609px;left:165px;width:84px;background:linear-gradient(90deg,#2f0dfe 0.5px,#521dfd 39.5px,#580dd9 83.5px)"></i>
<i style="top:610px;left:166px;width:80px;background:linear-gradient(90deg,#2f0dfe 0.5px,#3b12ff 12.5px,#521cfc 38.5px,#570ddb 79.5px)"></i>
<i style="top:611px;left:167px;width:77px;background:linear-gradient(90deg,#300dff 0.5px,#511bfd 36.5px,#560cdc 76.5px)"></i>
<i style="top:612px;left:167px;width:75px;background:linear-gradient(90deg,#300cff 0.5px,#501afd 36.5px,#550cde 74.5px)"></i>
<i style="top:613px;left:168px;width:72px;background:linear-gradient(90deg,#300bff 0.5px,#4e19fd 33.5px,#540bdf 71.5px)"></i>
<i style="top:614px;left:169px;width:68px;background:linear-gradient(90deg,#310bff 0.5px,#4e18fd 32.5px,#530be1 67.5px)"></i>
<i style="top:615px;left:170px;width:65px;background:linear-gradient(90deg,#310bff 0.5px,#4d17fd 31.5px,#520be2 64.5px)"></i>
<i style="top:616px;left:171px;width:62px;background:linear-gradient(90deg,#320aff 0.5px,#4c15fd 30.5px,#510ae3 61.5px)"></i>
<i style="top:617px;left:172px;width:59px;background:linear-gradient(90deg,#320aff 0.5px,#4b14fd 27.5px,#4c14fd 29.5px,#4f09e5 58.5px)"></i>
<i style="top:618px;left:173px;width:56px;background:linear-gradient(90deg,#3309ff 0.5px,#4b13fd 27.5px,#4e09e6 55.5px)"></i>
<i style="top:619px;left:174px;width:52px;background:linear-gradient(90deg,#3409ff 0.5px,#4a12fd 26.5px,#4d09e8 51.5px)"></i>
<i style="top:620px;left:175px;width:49px;background:linear-gradient(90deg,#3408ff 0.5px,#4711fe 22.5px,#4a0ff9 29.5px,#4c08e9 48.5px)"></i>
<i style="top:621px;left:176px;width:46px;background:linear-gradient(90deg,#3408ff 0.5px,#4810fd 22.5px,#4b08eb 45.5px)"></i>
<i style="top:622px;left:177px;width:43px;background:linear-gradient(90deg,#3507ff 0.5px,#460ffe 19.5px,#4a07ec 42.5px)"></i>
<i style="top:623px;left:178px;width:40px;background:linear-gradient(90deg,#3507ff 0.5px,#450efe 18.5px,#4907ed 39.5px)"></i>
<i style="top:624px;left:179px;width:36px;background:linear-gradient(90deg,#3606ff 0.5px,#450dfe 17.5px,#4806ef 35.5px)"></i>
<i style="top:625px;left:180px;width:33px;background:linear-gradient(90deg,#3606ff 0.5px,#440cfd 16.5px,#4706f1 32.5px)"></i>
<i style="top:626px;left:181px;width:30px;background:linear-gradient(90deg,#3705ff 0.5px,#430afe 14.5px,#4505f2 29.5px)"></i>
<i style="top:627px;left:183px;width:26px;background:linear-gradient(90deg,#3805ff 0.5px,#4309fd 13.5px,#4405f3 25.5px)"></i>
<i style="top:628px;left:184px;width:23px;background:linear-gradient(90deg,#3805ff 0.5px,#4208fd 11.5px,#4304f4 22.5px)"></i>
<i style="top:629px;left:185px;width:19px;background:linear-gradient(90deg,#3904ff 0.5px,#4107fe 9.5px,#4204f7 18.5px)"></i>
<i style="top:630px;left:186px;width:16px;background:linear-gradient(90deg,#3904fe 0.5px,#3f06fe 7.5px,#4104f8 15.5px)"></i>
<i style="top:631px;left:187px;width:13px;background:linear-gradient(90deg,#3a03fe 0.5px,#3f05fe 6.5px,#4003f9 12.5px)"></i>
<i style="top:632px;left:188px;width:10px;background:linear-gradient(90deg,#3a03fe 0.5px,#3e04fe 5.5px,#3f03fa 9.5px)"></i>
<i style="top:633px;left:190px;width:5px;background:linear-gradient(90deg,#3c02fe 0.5px,#3e02fc 4.5px)"></i>
<i style="top:634px;left:191px;width:2px;background:linear-gradient(90deg,#3c02fe 0.5px,#3c02fe 1.5px)"></i>
<div class="mk" style="left:78px;top:276px"></div>
<div class="lb" style="left:84.6px;top:272.2px">500nm</div>
<div class="mk" style="left:82px;top:134px"></div>
<div class="lb" style="left:88.6px;top:130.2px">510nm</div>
<div class="mk" style="left:123px;top:77px"></div>
<div class="lb" style="left:129.6px;top:73.2px">520nm</div>
<div class="mk" style="left:179px;top:96px"></div>
<div class="lb" style="left:185.6px;top:92.2px">530nm</div>
<div class="mk" style="left:230px;top:131px"></div>
<div class="lb" style="left:236.6px;top:127.2px">540nm</div>
<div class="mk" style="left:280px;top:172px"></div>
<div class="lb" style="left:286.6px;top:168.2px">550nm</div>
<div class="mk" style="left:329px;top:218px"></div>
<div class="lb" style="left:335.6px;top:214.2px">560nm</div>
<div class="mk" style="left:378px;top:265px"></div>
<div class="lb" style="left:384.6px;top:261.2px">570nm</div>
<div class="mk" style="left:425px;top:310px"></div>
<div class="lb" style="left:431.6px;top:306.2px">580nm</div>
<div class="mk" style="left:468px;top:352px"></div>
<div class="lb" style="left:474.6px;top:348.2px">590nm</div>
<div class="mk" style="left:504px;top:387px"></div>
<div class="lb" style="left:510.6px;top:383.2px">600nm</div>
<div class="mk" style="left:531px;top:413px"></div>
<div class="lb" style="left:537.6px;top:409.2px">610nm</div>
<div class="mk" style="left:548px;top:430px"></div>
<div class="lb" style="left:554.6px;top:426.2px">620nm</div>
<div class="mk" style="left:567px;top:448px"></div>
<div class="lb" style="left:573.6px;top:444.2px">640nm</div>
<div class="mk" style="left:578px;top:459px"></div>
<div class="lb" style="left:584.6px;top:455.2px">780nm</div>
<div class="mk" style="left:192px;top:634px"></div>
<div class="lb lr" style="right:-185.5px;top:631.2px">380nm</div>
<div class="mk" style="left:180px;top:625px"></div>
<div class="lb lr" style="right:-173.5px;top:621.2px">450nm</div>
<div class="mk" style="left:171px;top:617px"></div>
<div class="lb lr" style="right:-164.5px;top:613.2px">460nm</div>
<div class="mk" style="left:157px;top:598px"></div>
<div class="lb lr" style="right:-150.5px;top:594.2px">470nm</div>
<div class="mk" style="left:135px;top:548px"></div>
<div class="lb lr" style="right:-128.5px;top:544.2px">480nm</div>
<div class="mk" style="left:103px;top:439px"></div>
<div class="lb lr" style="right:-96.5px;top:435.2px">490nm</div>
<div class="mk" style="left:302px;top:413px"></div>
<div class="lb" style="left:308.2px;top:409.2px;transform:scaleX(.846)">CIE White Point</div>
</div>
<svg class="ov" width="623" height="607" viewBox="72 33 623 607" shape-rendering="crispEdges"><polyline points="542.6,425.0 533.0,416.0 523.2,407.3 513.7,399.4 504.1,391.9 495.0,385.4 485.8,379.6 477.0,374.7 468.4,370.5 462.5,368.1 454.7,365.4 446.8,363.2 439.0,361.6 431.4,360.5 424.1,359.9 417.0,359.8 410.2,360.0 403.8,360.6 397.6,361.4 391.8,362.5 386.2,363.8 380.9,365.2 375.9,366.7 371.1,368.4 366.5,370.1 362.1,371.9 358.0,373.7 354.0,375.6 350.2,377.5 346.6,379.4 343.1,381.3 339.8,383.2 336.7,385.1 335.6,385.7 328.4,390.2 322.0,394.6 316.3,398.7 311.2,402.6 306.6,406.2 302.4,409.6 298.7,412.8 295.3,415.8 292.3,418.7 289.5,421.3 286.9,423.8 284.6,426.1 282.4,428.2 280.4,430.3 278.6,432.2 276.9,433.9 275.3,435.6 273.8,437.2 272.5,438.7 271.2,440.1 270.0,441.4 268.9,442.7 267.9,443.9 266.9,445.0 263.5,449.0 260.8,452.2 258.5,454.9 256.7,457.2 255.2,459.2 253.9,460.8 252.7,462.3 251.7,463.5 250.9,464.6 250.1,465.6 249.5,466.5 248.9,467.3 248.3,468.0 247.9,468.6 247.4,469.2 243.3,474.7" fill="none" stroke="#747a86" stroke-width=".85"/></svg>
<div id="bl"></div><div id="bt"></div><div id="bb"></div><div id="bw"></div>
<div class="gv" style="left:70px"></div>
<div class="gv" style="left:139px"></div>
<div class="gv" style="left:208px"></div>
<div class="gv" style="left:277px"></div>
<div class="gv" style="left:345px"></div>
<div class="gv" style="left:414px"></div>
<div class="gv" style="left:483px"></div>
<div class="gv" style="left:552px"></div>
<div class="gh" style="top:571px"></div>
<div class="gh" style="top:538px"></div>
<div class="gh" style="top:504px"></div>
<div class="gh" style="top:471px"></div>
<div class="gh" style="top:437px"></div>
<div class="gh" style="top:404px"></div>
<div class="gh" style="top:370px"></div>
<div class="gh" style="top:337px"></div>
<div class="gh" style="top:303px"></div>
<div class="gh" style="top:269px"></div>
<div class="gh" style="top:236px"></div>
<div class="gh" style="top:202px"></div>
<div class="gh" style="top:169px"></div>
<div class="gh" style="top:135px"></div>
<div class="gh" style="top:102px"></div>
<div class="gh" style="top:68px"></div>
<div class="gh" style="top:35px"></div>
<svg class="ov" width="623" height="607" viewBox="72 33 623 607" shape-rendering="crispEdges"><polygon points="280.5,408.5 376.5,348.5 376.5,382.5 280.5,453.5" fill="none" stroke="#000" stroke-width="1"/><polygon points="376.5,348.5 417.5,343.5 417.5,382.5 376.5,382.5" fill="none" stroke="#000" stroke-width="1"/><rect x="279" y="407" width="3" height="3" fill="#000"/><rect x="375" y="347" width="3" height="3" fill="#000"/><rect x="375" y="381" width="3" height="3" fill="#000"/><rect x="279" y="452" width="3" height="3" fill="#000"/><rect x="416" y="342" width="3" height="3" fill="#000"/><rect x="416" y="381" width="3" height="3" fill="#000"/><rect x="334" y="34" width="1" height="605" fill="#f00"/><rect x="74" y="386" width="620" height="1" fill="#f00"/><circle cx="334.5" cy="386.5" r="2.7" fill="#f00" shape-rendering="auto"/></svg>
</div>
<div class="tk" style="left:66px;top:638px;width:5px;height:1px"></div>
<div class="yl" style="left:3px;top:632px">0.0000</div>
<div class="tk" style="left:73px;top:640px;width:1px;height:5px"></div>
<div class="xl" style="left:42px;top:646px">0.0000</div>
<div class="tk" style="left:66px;top:571px;width:5px;height:1px"></div>
<div class="yl" style="left:3px;top:565px">0.1000</div>
<div class="tk" style="left:142px;top:640px;width:1px;height:5px"></div>
<div class="xl" style="left:111px;top:646px">0.1000</div>
<div class="tk" style="left:66px;top:504px;width:5px;height:1px"></div>
<div class="yl" style="left:3px;top:498px">0.2000</div>
<div class="tk" style="left:211px;top:640px;width:1px;height:5px"></div>
<div class="xl" style="left:180px;top:646px">0.2000</div>
<div class="tk" style="left:66px;top:437px;width:5px;height:1px"></div>
<div class="yl" style="left:3px;top:431px">0.3000</div>
<div class="tk" style="left:280px;top:640px;width:1px;height:5px"></div>
<div class="xl" style="left:249px;top:646px">0.3000</div>
<div class="tk" style="left:66px;top:370px;width:5px;height:1px"></div>
<div class="yl" style="left:3px;top:364px">0.4000</div>
<div class="tk" style="left:349px;top:640px;width:1px;height:5px"></div>
<div class="xl" style="left:318px;top:646px">0.4000</div>
<div class="tk" style="left:66px;top:302px;width:5px;height:1px"></div>
<div class="yl" style="left:3px;top:296px">0.5000</div>
<div class="tk" style="left:417px;top:640px;width:1px;height:5px"></div>
<div class="xl" style="left:386px;top:646px">0.5000</div>
<div class="tk" style="left:66px;top:235px;width:5px;height:1px"></div>
<div class="yl" style="left:3px;top:229px">0.6000</div>
<div class="tk" style="left:486px;top:640px;width:1px;height:5px"></div>
<div class="xl" style="left:455px;top:646px">0.6000</div>
<div class="tk" style="left:66px;top:168px;width:5px;height:1px"></div>
<div class="yl" style="left:3px;top:162px">0.7000</div>
<div class="tk" style="left:555px;top:640px;width:1px;height:5px"></div>
<div class="xl" style="left:524px;top:646px">0.7000</div>
<div class="tk" style="left:66px;top:101px;width:5px;height:1px"></div>
<div class="yl" style="left:3px;top:95px">0.8000</div>
<div class="tk" style="left:624px;top:640px;width:1px;height:5px"></div>
<div class="xl" style="left:593px;top:646px">0.8000</div>
<div class="tk" style="left:66px;top:34px;width:5px;height:1px"></div>
<div class="yl" style="left:3px;top:28px">0.9000</div>
<div class="tk" style="left:693px;top:640px;width:1px;height:5px"></div>
<div class="xl" style="left:662px;top:646px">0.9000</div>
<div class="xl" style="left:353px;top:665px;letter-spacing:0">x</div>
<div id="yy" style="position:absolute;left:13.7px;top:332px;width:13px;height:13px;line-height:13px;text-align:center;transform:rotate(-90deg)">y</div>
</body></html>
